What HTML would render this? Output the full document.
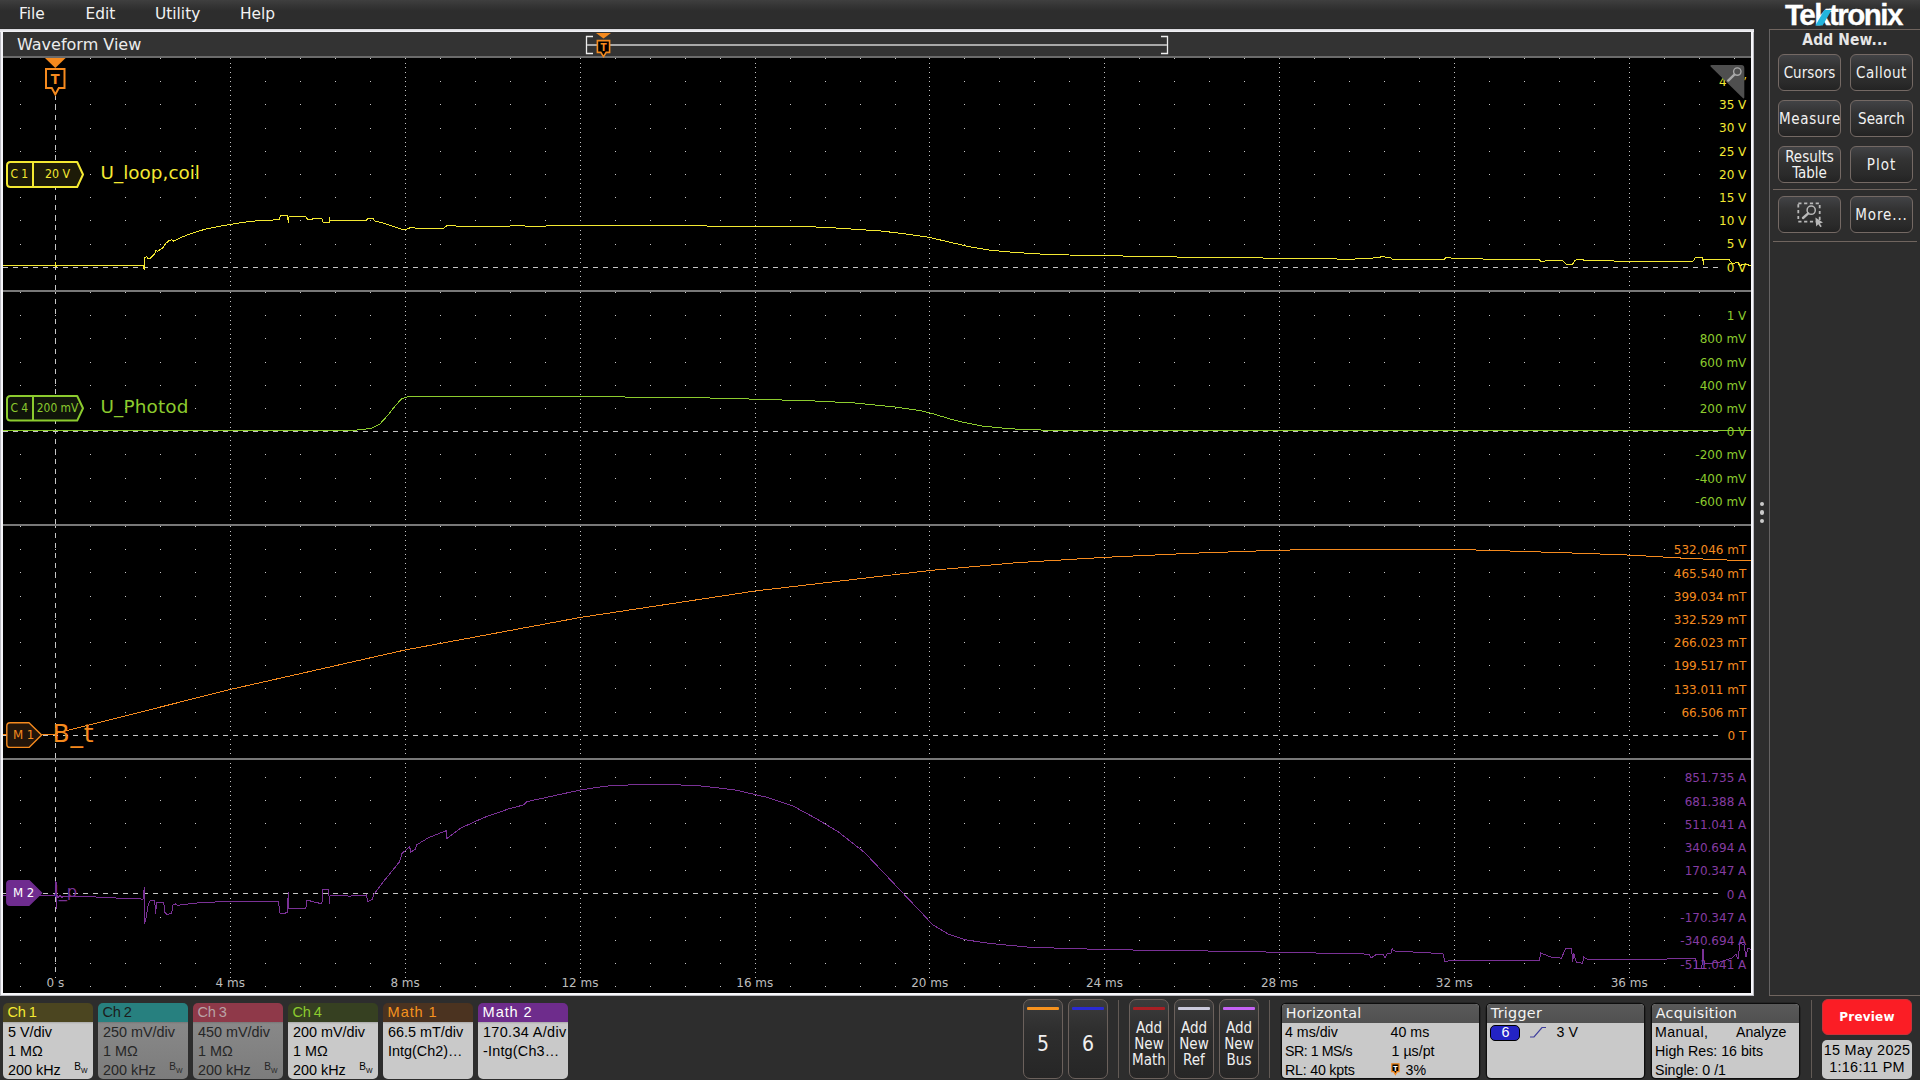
<!DOCTYPE html><html><head><meta charset='utf-8'><title>Waveform View</title><style>
*{box-sizing:border-box}
html,body{margin:0;padding:0}
body{width:1920px;height:1080px;background:#2d2d2d;position:relative;overflow:hidden;font-family:'Liberation Sans','DejaVu Sans',sans-serif;color:#eee}
.abs{position:absolute}
#menubar{left:0;top:0;width:1920px;height:29px;background:linear-gradient(#3f3f3f 0,#363636 5px,#2d2d2d 11px,#2d2d2d 100%)}
#menuline{left:0;top:28px;width:1755px;height:1px;background:#292929}
.menu{top:1px;height:28px;line-height:27px;font-family:'DejaVu Sans','Liberation Sans',sans-serif;font-size:15.4px;color:#f2f2f2;white-space:pre}
#frameo{left:0;top:29px;width:1754px;height:967px;background:#bcbcc2}
#framet{left:0;top:29px;width:1754px;height:3px;background:linear-gradient(#d6d6da,#e6e6ea 50%,#f5f5f9)}
#framei{left:1px;top:30px;width:1752px;height:965px;background:#f6f6fa}
#titlebar{left:3px;top:32px;width:1748px;height:24px;background:#333}
#titleline{left:3px;top:56px;width:1748px;height:2px;background:#6b6b6b}
#title{left:17px;top:33px;height:24px;line-height:24px;font-family:'DejaVu Sans','Liberation Sans',sans-serif;font-size:16px;color:#ececec;white-space:pre}
#plot{left:3px;top:58px;width:1748px;height:935px;background:#000}
.sep{left:3px;width:1748px;height:2px;background:#787878}
svg{position:absolute;left:0;top:0}
svg text{white-space:pre}
/* right panel */
.rline{background:#70655f}
#addnew{left:1770px;top:30px;width:150px;height:20px;line-height:20px;letter-spacing:0.15px;text-align:center;font-family:'DejaVu Sans Condensed','DejaVu Sans','Liberation Sans',sans-serif;font-weight:bold;font-size:15.4px;color:#e6e6e6}
.rbtn{width:63px;height:37px;border:1px solid #746964;border-radius:6px;background:linear-gradient(#424346 0%,#333 35%,#2a2a2a 80%,#232323 100%);font-family:'DejaVu Sans Condensed','DejaVu Sans','Liberation Sans',sans-serif;font-size:15px;color:#f2f2f2;text-align:center;line-height:37px;white-space:pre}
.rbtn.two{line-height:16.4px;padding-top:1.6px}
/* bottom badges */
.badge{top:1003px;width:90px;height:76px;border-radius:5px;overflow:hidden;font-family:'Liberation Sans','DejaVu Sans',sans-serif;font-size:14.4px;color:#000}
.badge .hd{position:absolute;left:0;top:0;width:100%;height:19px;line-height:19px;padding-left:4.6px;font-size:14.6px;white-space:pre}
.badge .bd{position:absolute;left:0;top:19px;width:100%;height:57px;background:linear-gradient(#a9a9a9 0,#c9c9c9 2px,#c9c9c9 100%)}
.badge.off .bd{background:linear-gradient(#777 0,#888 2px,#7c7c7c 100%);color:#262626}
.badge .ln{position:absolute;left:5px;height:19px;line-height:19px;white-space:pre}
.bw{position:absolute;left:71.3px;top:40.3px;font-size:10px;line-height:10px;white-space:pre}
.bw sub{font-size:6.9px;vertical-align:-2.6px;line-height:0}
.sbtn{top:999px;width:40px;height:80px;border:1px solid #6b615c;border-radius:7px;background:linear-gradient(#3c3c3c 0%,#2e2e2e 40%,#262626 100%);font-family:'DejaVu Sans Condensed','DejaVu Sans','Liberation Sans',sans-serif;color:#f0f0f0;text-align:center}
.sbtn .bar{position:absolute;left:3px;top:7.2px;width:32px;height:2.5px;border-radius:1px}
.sbtn .num{position:absolute;left:0;top:29.8px;width:38px;font-size:21px;line-height:28px}
.sbtn .txt{position:absolute;left:-4px;top:20.4px;width:46px;font-size:15px;line-height:16px;white-space:pre}
.vdiv{top:1000px;width:1px;height:78px;background:#625a55}
.ibadge{top:1004px;height:74px;box-shadow:0 0 0 1.3px #0e0e0e;border-radius:4px;overflow:hidden;background:#c9c9c9;font-family:'Liberation Sans','DejaVu Sans',sans-serif;font-size:14.2px;color:#000}
.ibadge .hd{position:absolute;left:0;top:0;width:100%;height:18.5px;line-height:19px;padding-left:3.8px;letter-spacing:0.28px;background:linear-gradient(#5a5a5a,#505050);font-family:'DejaVu Sans','Liberation Sans',sans-serif;font-size:14.3px;color:#f4f4f4;white-space:pre}
.ibadge .ln{position:absolute;height:19px;line-height:19px;white-space:pre}
#preview{left:1822px;top:999px;width:90px;height:36px;border-radius:6px;background:#fb1d25;border:1px solid #c8333a;font-family:'DejaVu Sans','Liberation Sans',sans-serif;font-weight:bold;font-size:12px;letter-spacing:0.2px;color:#fff;text-align:center;line-height:35px}
#logo{left:1785px;top:-1px;height:32px;line-height:32px;font-family:'Liberation Sans','DejaVu Sans',sans-serif;font-weight:bold;font-size:29.6px;letter-spacing:-1.58px;color:#fff;white-space:pre;-webkit-text-stroke:0.3px #fff}
#date{left:1822px;top:1040px;width:90px;height:39px;border-radius:5px;background:#c9c9c9;font-family:'Liberation Sans','DejaVu Sans',sans-serif;font-size:14.4px;letter-spacing:0.32px;color:#000;text-align:center;line-height:17px;padding-top:2px;white-space:pre}
</style></head><body><div id='menubar' class='abs'></div><div id='menuline' class='abs'></div><div class='abs menu' style='left:19px'>File</div><div class='abs menu' style='left:85.5px'>Edit</div><div class='abs menu' style='left:155px'>Utility</div><div class='abs menu' style='left:240px'>Help</div><div id='frameo' class='abs'></div><div id='framei' class='abs'></div><div id='framet' class='abs'></div><div id='titlebar' class='abs'></div><div id='titleline' class='abs'></div><div id='title' class='abs'>Waveform View</div><div id='plot' class='abs'></div><svg width='1920' height='1080' viewBox='0 0 1920 1080' font-family="'DejaVu Sans','Liberation Sans',sans-serif"><path d='M20 58h1M20 81h1M20 104h1M20 128h1M20 151h1M20 174h1M20 197h1M20 220h1M20 244h1M20 292h1M20 315h1M20 338h1M20 362h1M20 385h1M20 408h1M20 454h1M20 478h1M20 501h1M20 526h1M20 549h1M20 572h1M20 596h1M20 619h1M20 642h1M20 665h1M20 688h1M20 712h1M20 777h1M20 800h1M20 823h1M20 847h1M20 870h1M20 917h1M20 940h1M20 963h1M20 986h1M55 58h1M55 81h1M55 104h1M55 128h1M55 151h1M55 174h1M55 197h1M55 220h1M55 244h1M55 292h1M55 315h1M55 338h1M55 362h1M55 385h1M55 408h1M55 454h1M55 478h1M55 501h1M55 526h1M55 549h1M55 572h1M55 596h1M55 619h1M55 642h1M55 665h1M55 688h1M55 712h1M55 777h1M55 800h1M55 823h1M55 847h1M55 870h1M55 917h1M55 940h1M55 963h1M55 986h1M90 58h1M90 81h1M90 104h1M90 128h1M90 151h1M90 174h1M90 197h1M90 220h1M90 244h1M90 292h1M90 315h1M90 338h1M90 362h1M90 385h1M90 408h1M90 454h1M90 478h1M90 501h1M90 526h1M90 549h1M90 572h1M90 596h1M90 619h1M90 642h1M90 665h1M90 688h1M90 712h1M90 777h1M90 800h1M90 823h1M90 847h1M90 870h1M90 917h1M90 940h1M90 963h1M90 986h1M125 58h1M125 81h1M125 104h1M125 128h1M125 151h1M125 174h1M125 197h1M125 220h1M125 244h1M125 292h1M125 315h1M125 338h1M125 362h1M125 385h1M125 408h1M125 454h1M125 478h1M125 501h1M125 526h1M125 549h1M125 572h1M125 596h1M125 619h1M125 642h1M125 665h1M125 688h1M125 712h1M125 777h1M125 800h1M125 823h1M125 847h1M125 870h1M125 917h1M125 940h1M125 963h1M125 986h1M160 58h1M160 81h1M160 104h1M160 128h1M160 151h1M160 174h1M160 197h1M160 220h1M160 244h1M160 292h1M160 315h1M160 338h1M160 362h1M160 385h1M160 408h1M160 454h1M160 478h1M160 501h1M160 526h1M160 549h1M160 572h1M160 596h1M160 619h1M160 642h1M160 665h1M160 688h1M160 712h1M160 777h1M160 800h1M160 823h1M160 847h1M160 870h1M160 917h1M160 940h1M160 963h1M160 986h1M195 58h1M195 81h1M195 104h1M195 128h1M195 151h1M195 174h1M195 197h1M195 220h1M195 244h1M195 292h1M195 315h1M195 338h1M195 362h1M195 385h1M195 408h1M195 454h1M195 478h1M195 501h1M195 526h1M195 549h1M195 572h1M195 596h1M195 619h1M195 642h1M195 665h1M195 688h1M195 712h1M195 777h1M195 800h1M195 823h1M195 847h1M195 870h1M195 917h1M195 940h1M195 963h1M195 986h1M230 58h1M230 63h1M230 67h1M230 72h1M230 77h1M230 81h1M230 86h1M230 90h1M230 95h1M230 100h1M230 104h1M230 109h1M230 114h1M230 118h1M230 123h1M230 128h1M230 132h1M230 137h1M230 142h1M230 146h1M230 151h1M230 155h1M230 160h1M230 165h1M230 169h1M230 174h1M230 179h1M230 183h1M230 188h1M230 193h1M230 197h1M230 202h1M230 206h1M230 211h1M230 216h1M230 220h1M230 225h1M230 230h1M230 234h1M230 239h1M230 244h1M230 248h1M230 253h1M230 258h1M230 262h1M230 271h1M230 276h1M230 281h1M230 285h1M230 292h1M230 297h1M230 301h1M230 306h1M230 311h1M230 315h1M230 320h1M230 324h1M230 329h1M230 334h1M230 338h1M230 343h1M230 348h1M230 352h1M230 357h1M230 362h1M230 366h1M230 371h1M230 376h1M230 380h1M230 385h1M230 389h1M230 394h1M230 399h1M230 403h1M230 408h1M230 413h1M230 417h1M230 422h1M230 427h1M230 436h1M230 440h1M230 445h1M230 450h1M230 454h1M230 459h1M230 464h1M230 468h1M230 473h1M230 478h1M230 482h1M230 487h1M230 492h1M230 496h1M230 501h1M230 505h1M230 510h1M230 515h1M230 519h1M230 526h1M230 531h1M230 535h1M230 540h1M230 545h1M230 549h1M230 554h1M230 558h1M230 563h1M230 568h1M230 572h1M230 577h1M230 582h1M230 586h1M230 591h1M230 596h1M230 600h1M230 605h1M230 610h1M230 614h1M230 619h1M230 623h1M230 628h1M230 633h1M230 637h1M230 642h1M230 647h1M230 651h1M230 656h1M230 661h1M230 665h1M230 670h1M230 674h1M230 679h1M230 684h1M230 688h1M230 693h1M230 698h1M230 702h1M230 707h1M230 712h1M230 716h1M230 721h1M230 726h1M230 730h1M230 739h1M230 744h1M230 749h1M230 753h1M230 763h1M230 767h1M230 772h1M230 777h1M230 781h1M230 786h1M230 791h1M230 795h1M230 800h1M230 805h1M230 809h1M230 814h1M230 819h1M230 823h1M230 828h1M230 833h1M230 837h1M230 842h1M230 847h1M230 851h1M230 856h1M230 861h1M230 865h1M230 870h1M230 875h1M230 879h1M230 884h1M230 889h1M230 898h1M230 903h1M230 907h1M230 912h1M230 917h1M230 921h1M230 926h1M230 931h1M230 935h1M230 940h1M230 945h1M230 949h1M230 954h1M230 959h1M230 963h1M230 968h1M230 972h1M230 977h1M230 982h1M230 986h1M230 991h1M265 58h1M265 81h1M265 104h1M265 128h1M265 151h1M265 174h1M265 197h1M265 220h1M265 244h1M265 292h1M265 315h1M265 338h1M265 362h1M265 385h1M265 408h1M265 454h1M265 478h1M265 501h1M265 526h1M265 549h1M265 572h1M265 596h1M265 619h1M265 642h1M265 665h1M265 688h1M265 712h1M265 777h1M265 800h1M265 823h1M265 847h1M265 870h1M265 917h1M265 940h1M265 963h1M265 986h1M300 58h1M300 81h1M300 104h1M300 128h1M300 151h1M300 174h1M300 197h1M300 220h1M300 244h1M300 292h1M300 315h1M300 338h1M300 362h1M300 385h1M300 408h1M300 454h1M300 478h1M300 501h1M300 526h1M300 549h1M300 572h1M300 596h1M300 619h1M300 642h1M300 665h1M300 688h1M300 712h1M300 777h1M300 800h1M300 823h1M300 847h1M300 870h1M300 917h1M300 940h1M300 963h1M300 986h1M335 58h1M335 81h1M335 104h1M335 128h1M335 151h1M335 174h1M335 197h1M335 220h1M335 244h1M335 292h1M335 315h1M335 338h1M335 362h1M335 385h1M335 408h1M335 454h1M335 478h1M335 501h1M335 526h1M335 549h1M335 572h1M335 596h1M335 619h1M335 642h1M335 665h1M335 688h1M335 712h1M335 777h1M335 800h1M335 823h1M335 847h1M335 870h1M335 917h1M335 940h1M335 963h1M335 986h1M370 58h1M370 81h1M370 104h1M370 128h1M370 151h1M370 174h1M370 197h1M370 220h1M370 244h1M370 292h1M370 315h1M370 338h1M370 362h1M370 385h1M370 408h1M370 454h1M370 478h1M370 501h1M370 526h1M370 549h1M370 572h1M370 596h1M370 619h1M370 642h1M370 665h1M370 688h1M370 712h1M370 777h1M370 800h1M370 823h1M370 847h1M370 870h1M370 917h1M370 940h1M370 963h1M370 986h1M405 58h1M405 63h1M405 67h1M405 72h1M405 77h1M405 81h1M405 86h1M405 90h1M405 95h1M405 100h1M405 104h1M405 109h1M405 114h1M405 118h1M405 123h1M405 128h1M405 132h1M405 137h1M405 142h1M405 146h1M405 151h1M405 155h1M405 160h1M405 165h1M405 169h1M405 174h1M405 179h1M405 183h1M405 188h1M405 193h1M405 197h1M405 202h1M405 206h1M405 211h1M405 216h1M405 220h1M405 225h1M405 230h1M405 234h1M405 239h1M405 244h1M405 248h1M405 253h1M405 258h1M405 262h1M405 271h1M405 276h1M405 281h1M405 285h1M405 292h1M405 297h1M405 301h1M405 306h1M405 311h1M405 315h1M405 320h1M405 324h1M405 329h1M405 334h1M405 338h1M405 343h1M405 348h1M405 352h1M405 357h1M405 362h1M405 366h1M405 371h1M405 376h1M405 380h1M405 385h1M405 389h1M405 394h1M405 399h1M405 403h1M405 408h1M405 413h1M405 417h1M405 422h1M405 427h1M405 436h1M405 440h1M405 445h1M405 450h1M405 454h1M405 459h1M405 464h1M405 468h1M405 473h1M405 478h1M405 482h1M405 487h1M405 492h1M405 496h1M405 501h1M405 505h1M405 510h1M405 515h1M405 519h1M405 526h1M405 531h1M405 535h1M405 540h1M405 545h1M405 549h1M405 554h1M405 558h1M405 563h1M405 568h1M405 572h1M405 577h1M405 582h1M405 586h1M405 591h1M405 596h1M405 600h1M405 605h1M405 610h1M405 614h1M405 619h1M405 623h1M405 628h1M405 633h1M405 637h1M405 642h1M405 647h1M405 651h1M405 656h1M405 661h1M405 665h1M405 670h1M405 674h1M405 679h1M405 684h1M405 688h1M405 693h1M405 698h1M405 702h1M405 707h1M405 712h1M405 716h1M405 721h1M405 726h1M405 730h1M405 739h1M405 744h1M405 749h1M405 753h1M405 763h1M405 767h1M405 772h1M405 777h1M405 781h1M405 786h1M405 791h1M405 795h1M405 800h1M405 805h1M405 809h1M405 814h1M405 819h1M405 823h1M405 828h1M405 833h1M405 837h1M405 842h1M405 847h1M405 851h1M405 856h1M405 861h1M405 865h1M405 870h1M405 875h1M405 879h1M405 884h1M405 889h1M405 898h1M405 903h1M405 907h1M405 912h1M405 917h1M405 921h1M405 926h1M405 931h1M405 935h1M405 940h1M405 945h1M405 949h1M405 954h1M405 959h1M405 963h1M405 968h1M405 972h1M405 977h1M405 982h1M405 986h1M405 991h1M440 58h1M440 81h1M440 104h1M440 128h1M440 151h1M440 174h1M440 197h1M440 220h1M440 244h1M440 292h1M440 315h1M440 338h1M440 362h1M440 385h1M440 408h1M440 454h1M440 478h1M440 501h1M440 526h1M440 549h1M440 572h1M440 596h1M440 619h1M440 642h1M440 665h1M440 688h1M440 712h1M440 777h1M440 800h1M440 823h1M440 847h1M440 870h1M440 917h1M440 940h1M440 963h1M440 986h1M475 58h1M475 81h1M475 104h1M475 128h1M475 151h1M475 174h1M475 197h1M475 220h1M475 244h1M475 292h1M475 315h1M475 338h1M475 362h1M475 385h1M475 408h1M475 454h1M475 478h1M475 501h1M475 526h1M475 549h1M475 572h1M475 596h1M475 619h1M475 642h1M475 665h1M475 688h1M475 712h1M475 777h1M475 800h1M475 823h1M475 847h1M475 870h1M475 917h1M475 940h1M475 963h1M475 986h1M510 58h1M510 81h1M510 104h1M510 128h1M510 151h1M510 174h1M510 197h1M510 220h1M510 244h1M510 292h1M510 315h1M510 338h1M510 362h1M510 385h1M510 408h1M510 454h1M510 478h1M510 501h1M510 526h1M510 549h1M510 572h1M510 596h1M510 619h1M510 642h1M510 665h1M510 688h1M510 712h1M510 777h1M510 800h1M510 823h1M510 847h1M510 870h1M510 917h1M510 940h1M510 963h1M510 986h1M545 58h1M545 81h1M545 104h1M545 128h1M545 151h1M545 174h1M545 197h1M545 220h1M545 244h1M545 292h1M545 315h1M545 338h1M545 362h1M545 385h1M545 408h1M545 454h1M545 478h1M545 501h1M545 526h1M545 549h1M545 572h1M545 596h1M545 619h1M545 642h1M545 665h1M545 688h1M545 712h1M545 777h1M545 800h1M545 823h1M545 847h1M545 870h1M545 917h1M545 940h1M545 963h1M545 986h1M580 58h1M580 63h1M580 67h1M580 72h1M580 77h1M580 81h1M580 86h1M580 90h1M580 95h1M580 100h1M580 104h1M580 109h1M580 114h1M580 118h1M580 123h1M580 128h1M580 132h1M580 137h1M580 142h1M580 146h1M580 151h1M580 155h1M580 160h1M580 165h1M580 169h1M580 174h1M580 179h1M580 183h1M580 188h1M580 193h1M580 197h1M580 202h1M580 206h1M580 211h1M580 216h1M580 220h1M580 225h1M580 230h1M580 234h1M580 239h1M580 244h1M580 248h1M580 253h1M580 258h1M580 262h1M580 271h1M580 276h1M580 281h1M580 285h1M580 292h1M580 297h1M580 301h1M580 306h1M580 311h1M580 315h1M580 320h1M580 324h1M580 329h1M580 334h1M580 338h1M580 343h1M580 348h1M580 352h1M580 357h1M580 362h1M580 366h1M580 371h1M580 376h1M580 380h1M580 385h1M580 389h1M580 394h1M580 399h1M580 403h1M580 408h1M580 413h1M580 417h1M580 422h1M580 427h1M580 436h1M580 440h1M580 445h1M580 450h1M580 454h1M580 459h1M580 464h1M580 468h1M580 473h1M580 478h1M580 482h1M580 487h1M580 492h1M580 496h1M580 501h1M580 505h1M580 510h1M580 515h1M580 519h1M580 526h1M580 531h1M580 535h1M580 540h1M580 545h1M580 549h1M580 554h1M580 558h1M580 563h1M580 568h1M580 572h1M580 577h1M580 582h1M580 586h1M580 591h1M580 596h1M580 600h1M580 605h1M580 610h1M580 614h1M580 619h1M580 623h1M580 628h1M580 633h1M580 637h1M580 642h1M580 647h1M580 651h1M580 656h1M580 661h1M580 665h1M580 670h1M580 674h1M580 679h1M580 684h1M580 688h1M580 693h1M580 698h1M580 702h1M580 707h1M580 712h1M580 716h1M580 721h1M580 726h1M580 730h1M580 739h1M580 744h1M580 749h1M580 753h1M580 763h1M580 767h1M580 772h1M580 777h1M580 781h1M580 786h1M580 791h1M580 795h1M580 800h1M580 805h1M580 809h1M580 814h1M580 819h1M580 823h1M580 828h1M580 833h1M580 837h1M580 842h1M580 847h1M580 851h1M580 856h1M580 861h1M580 865h1M580 870h1M580 875h1M580 879h1M580 884h1M580 889h1M580 898h1M580 903h1M580 907h1M580 912h1M580 917h1M580 921h1M580 926h1M580 931h1M580 935h1M580 940h1M580 945h1M580 949h1M580 954h1M580 959h1M580 963h1M580 968h1M580 972h1M580 977h1M580 982h1M580 986h1M580 991h1M615 58h1M615 81h1M615 104h1M615 128h1M615 151h1M615 174h1M615 197h1M615 220h1M615 244h1M615 292h1M615 315h1M615 338h1M615 362h1M615 385h1M615 408h1M615 454h1M615 478h1M615 501h1M615 526h1M615 549h1M615 572h1M615 596h1M615 619h1M615 642h1M615 665h1M615 688h1M615 712h1M615 777h1M615 800h1M615 823h1M615 847h1M615 870h1M615 917h1M615 940h1M615 963h1M615 986h1M650 58h1M650 81h1M650 104h1M650 128h1M650 151h1M650 174h1M650 197h1M650 220h1M650 244h1M650 292h1M650 315h1M650 338h1M650 362h1M650 385h1M650 408h1M650 454h1M650 478h1M650 501h1M650 526h1M650 549h1M650 572h1M650 596h1M650 619h1M650 642h1M650 665h1M650 688h1M650 712h1M650 777h1M650 800h1M650 823h1M650 847h1M650 870h1M650 917h1M650 940h1M650 963h1M650 986h1M685 58h1M685 81h1M685 104h1M685 128h1M685 151h1M685 174h1M685 197h1M685 220h1M685 244h1M685 292h1M685 315h1M685 338h1M685 362h1M685 385h1M685 408h1M685 454h1M685 478h1M685 501h1M685 526h1M685 549h1M685 572h1M685 596h1M685 619h1M685 642h1M685 665h1M685 688h1M685 712h1M685 777h1M685 800h1M685 823h1M685 847h1M685 870h1M685 917h1M685 940h1M685 963h1M685 986h1M720 58h1M720 81h1M720 104h1M720 128h1M720 151h1M720 174h1M720 197h1M720 220h1M720 244h1M720 292h1M720 315h1M720 338h1M720 362h1M720 385h1M720 408h1M720 454h1M720 478h1M720 501h1M720 526h1M720 549h1M720 572h1M720 596h1M720 619h1M720 642h1M720 665h1M720 688h1M720 712h1M720 777h1M720 800h1M720 823h1M720 847h1M720 870h1M720 917h1M720 940h1M720 963h1M720 986h1M755 58h1M755 63h1M755 67h1M755 72h1M755 77h1M755 81h1M755 86h1M755 90h1M755 95h1M755 100h1M755 104h1M755 109h1M755 114h1M755 118h1M755 123h1M755 128h1M755 132h1M755 137h1M755 142h1M755 146h1M755 151h1M755 155h1M755 160h1M755 165h1M755 169h1M755 174h1M755 179h1M755 183h1M755 188h1M755 193h1M755 197h1M755 202h1M755 206h1M755 211h1M755 216h1M755 220h1M755 225h1M755 230h1M755 234h1M755 239h1M755 244h1M755 248h1M755 253h1M755 258h1M755 262h1M755 271h1M755 276h1M755 281h1M755 285h1M755 292h1M755 297h1M755 301h1M755 306h1M755 311h1M755 315h1M755 320h1M755 324h1M755 329h1M755 334h1M755 338h1M755 343h1M755 348h1M755 352h1M755 357h1M755 362h1M755 366h1M755 371h1M755 376h1M755 380h1M755 385h1M755 389h1M755 394h1M755 399h1M755 403h1M755 408h1M755 413h1M755 417h1M755 422h1M755 427h1M755 436h1M755 440h1M755 445h1M755 450h1M755 454h1M755 459h1M755 464h1M755 468h1M755 473h1M755 478h1M755 482h1M755 487h1M755 492h1M755 496h1M755 501h1M755 505h1M755 510h1M755 515h1M755 519h1M755 526h1M755 531h1M755 535h1M755 540h1M755 545h1M755 549h1M755 554h1M755 558h1M755 563h1M755 568h1M755 572h1M755 577h1M755 582h1M755 586h1M755 591h1M755 596h1M755 600h1M755 605h1M755 610h1M755 614h1M755 619h1M755 623h1M755 628h1M755 633h1M755 637h1M755 642h1M755 647h1M755 651h1M755 656h1M755 661h1M755 665h1M755 670h1M755 674h1M755 679h1M755 684h1M755 688h1M755 693h1M755 698h1M755 702h1M755 707h1M755 712h1M755 716h1M755 721h1M755 726h1M755 730h1M755 739h1M755 744h1M755 749h1M755 753h1M755 763h1M755 767h1M755 772h1M755 777h1M755 781h1M755 786h1M755 791h1M755 795h1M755 800h1M755 805h1M755 809h1M755 814h1M755 819h1M755 823h1M755 828h1M755 833h1M755 837h1M755 842h1M755 847h1M755 851h1M755 856h1M755 861h1M755 865h1M755 870h1M755 875h1M755 879h1M755 884h1M755 889h1M755 898h1M755 903h1M755 907h1M755 912h1M755 917h1M755 921h1M755 926h1M755 931h1M755 935h1M755 940h1M755 945h1M755 949h1M755 954h1M755 959h1M755 963h1M755 968h1M755 972h1M755 977h1M755 982h1M755 986h1M755 991h1M790 58h1M790 81h1M790 104h1M790 128h1M790 151h1M790 174h1M790 197h1M790 220h1M790 244h1M790 292h1M790 315h1M790 338h1M790 362h1M790 385h1M790 408h1M790 454h1M790 478h1M790 501h1M790 526h1M790 549h1M790 572h1M790 596h1M790 619h1M790 642h1M790 665h1M790 688h1M790 712h1M790 777h1M790 800h1M790 823h1M790 847h1M790 870h1M790 917h1M790 940h1M790 963h1M790 986h1M825 58h1M825 81h1M825 104h1M825 128h1M825 151h1M825 174h1M825 197h1M825 220h1M825 244h1M825 292h1M825 315h1M825 338h1M825 362h1M825 385h1M825 408h1M825 454h1M825 478h1M825 501h1M825 526h1M825 549h1M825 572h1M825 596h1M825 619h1M825 642h1M825 665h1M825 688h1M825 712h1M825 777h1M825 800h1M825 823h1M825 847h1M825 870h1M825 917h1M825 940h1M825 963h1M825 986h1M860 58h1M860 81h1M860 104h1M860 128h1M860 151h1M860 174h1M860 197h1M860 220h1M860 244h1M860 292h1M860 315h1M860 338h1M860 362h1M860 385h1M860 408h1M860 454h1M860 478h1M860 501h1M860 526h1M860 549h1M860 572h1M860 596h1M860 619h1M860 642h1M860 665h1M860 688h1M860 712h1M860 777h1M860 800h1M860 823h1M860 847h1M860 870h1M860 917h1M860 940h1M860 963h1M860 986h1M895 58h1M895 81h1M895 104h1M895 128h1M895 151h1M895 174h1M895 197h1M895 220h1M895 244h1M895 292h1M895 315h1M895 338h1M895 362h1M895 385h1M895 408h1M895 454h1M895 478h1M895 501h1M895 526h1M895 549h1M895 572h1M895 596h1M895 619h1M895 642h1M895 665h1M895 688h1M895 712h1M895 777h1M895 800h1M895 823h1M895 847h1M895 870h1M895 917h1M895 940h1M895 963h1M895 986h1M929 58h1M929 63h1M929 67h1M929 72h1M929 77h1M929 81h1M929 86h1M929 90h1M929 95h1M929 100h1M929 104h1M929 109h1M929 114h1M929 118h1M929 123h1M929 128h1M929 132h1M929 137h1M929 142h1M929 146h1M929 151h1M929 155h1M929 160h1M929 165h1M929 169h1M929 174h1M929 179h1M929 183h1M929 188h1M929 193h1M929 197h1M929 202h1M929 206h1M929 211h1M929 216h1M929 220h1M929 225h1M929 230h1M929 234h1M929 239h1M929 244h1M929 248h1M929 253h1M929 258h1M929 262h1M929 271h1M929 276h1M929 281h1M929 285h1M929 292h1M929 297h1M929 301h1M929 306h1M929 311h1M929 315h1M929 320h1M929 324h1M929 329h1M929 334h1M929 338h1M929 343h1M929 348h1M929 352h1M929 357h1M929 362h1M929 366h1M929 371h1M929 376h1M929 380h1M929 385h1M929 389h1M929 394h1M929 399h1M929 403h1M929 408h1M929 413h1M929 417h1M929 422h1M929 427h1M929 436h1M929 440h1M929 445h1M929 450h1M929 454h1M929 459h1M929 464h1M929 468h1M929 473h1M929 478h1M929 482h1M929 487h1M929 492h1M929 496h1M929 501h1M929 505h1M929 510h1M929 515h1M929 519h1M929 526h1M929 531h1M929 535h1M929 540h1M929 545h1M929 549h1M929 554h1M929 558h1M929 563h1M929 568h1M929 572h1M929 577h1M929 582h1M929 586h1M929 591h1M929 596h1M929 600h1M929 605h1M929 610h1M929 614h1M929 619h1M929 623h1M929 628h1M929 633h1M929 637h1M929 642h1M929 647h1M929 651h1M929 656h1M929 661h1M929 665h1M929 670h1M929 674h1M929 679h1M929 684h1M929 688h1M929 693h1M929 698h1M929 702h1M929 707h1M929 712h1M929 716h1M929 721h1M929 726h1M929 730h1M929 739h1M929 744h1M929 749h1M929 753h1M929 763h1M929 767h1M929 772h1M929 777h1M929 781h1M929 786h1M929 791h1M929 795h1M929 800h1M929 805h1M929 809h1M929 814h1M929 819h1M929 823h1M929 828h1M929 833h1M929 837h1M929 842h1M929 847h1M929 851h1M929 856h1M929 861h1M929 865h1M929 870h1M929 875h1M929 879h1M929 884h1M929 889h1M929 898h1M929 903h1M929 907h1M929 912h1M929 917h1M929 921h1M929 926h1M929 931h1M929 935h1M929 940h1M929 945h1M929 949h1M929 954h1M929 959h1M929 963h1M929 968h1M929 972h1M929 977h1M929 982h1M929 986h1M929 991h1M964 58h1M964 81h1M964 104h1M964 128h1M964 151h1M964 174h1M964 197h1M964 220h1M964 244h1M964 292h1M964 315h1M964 338h1M964 362h1M964 385h1M964 408h1M964 454h1M964 478h1M964 501h1M964 526h1M964 549h1M964 572h1M964 596h1M964 619h1M964 642h1M964 665h1M964 688h1M964 712h1M964 777h1M964 800h1M964 823h1M964 847h1M964 870h1M964 917h1M964 940h1M964 963h1M964 986h1M999 58h1M999 81h1M999 104h1M999 128h1M999 151h1M999 174h1M999 197h1M999 220h1M999 244h1M999 292h1M999 315h1M999 338h1M999 362h1M999 385h1M999 408h1M999 454h1M999 478h1M999 501h1M999 526h1M999 549h1M999 572h1M999 596h1M999 619h1M999 642h1M999 665h1M999 688h1M999 712h1M999 777h1M999 800h1M999 823h1M999 847h1M999 870h1M999 917h1M999 940h1M999 963h1M999 986h1M1034 58h1M1034 81h1M1034 104h1M1034 128h1M1034 151h1M1034 174h1M1034 197h1M1034 220h1M1034 244h1M1034 292h1M1034 315h1M1034 338h1M1034 362h1M1034 385h1M1034 408h1M1034 454h1M1034 478h1M1034 501h1M1034 526h1M1034 549h1M1034 572h1M1034 596h1M1034 619h1M1034 642h1M1034 665h1M1034 688h1M1034 712h1M1034 777h1M1034 800h1M1034 823h1M1034 847h1M1034 870h1M1034 917h1M1034 940h1M1034 963h1M1034 986h1M1069 58h1M1069 81h1M1069 104h1M1069 128h1M1069 151h1M1069 174h1M1069 197h1M1069 220h1M1069 244h1M1069 292h1M1069 315h1M1069 338h1M1069 362h1M1069 385h1M1069 408h1M1069 454h1M1069 478h1M1069 501h1M1069 526h1M1069 549h1M1069 572h1M1069 596h1M1069 619h1M1069 642h1M1069 665h1M1069 688h1M1069 712h1M1069 777h1M1069 800h1M1069 823h1M1069 847h1M1069 870h1M1069 917h1M1069 940h1M1069 963h1M1069 986h1M1104 58h1M1104 63h1M1104 67h1M1104 72h1M1104 77h1M1104 81h1M1104 86h1M1104 90h1M1104 95h1M1104 100h1M1104 104h1M1104 109h1M1104 114h1M1104 118h1M1104 123h1M1104 128h1M1104 132h1M1104 137h1M1104 142h1M1104 146h1M1104 151h1M1104 155h1M1104 160h1M1104 165h1M1104 169h1M1104 174h1M1104 179h1M1104 183h1M1104 188h1M1104 193h1M1104 197h1M1104 202h1M1104 206h1M1104 211h1M1104 216h1M1104 220h1M1104 225h1M1104 230h1M1104 234h1M1104 239h1M1104 244h1M1104 248h1M1104 253h1M1104 258h1M1104 262h1M1104 271h1M1104 276h1M1104 281h1M1104 285h1M1104 292h1M1104 297h1M1104 301h1M1104 306h1M1104 311h1M1104 315h1M1104 320h1M1104 324h1M1104 329h1M1104 334h1M1104 338h1M1104 343h1M1104 348h1M1104 352h1M1104 357h1M1104 362h1M1104 366h1M1104 371h1M1104 376h1M1104 380h1M1104 385h1M1104 389h1M1104 394h1M1104 399h1M1104 403h1M1104 408h1M1104 413h1M1104 417h1M1104 422h1M1104 427h1M1104 436h1M1104 440h1M1104 445h1M1104 450h1M1104 454h1M1104 459h1M1104 464h1M1104 468h1M1104 473h1M1104 478h1M1104 482h1M1104 487h1M1104 492h1M1104 496h1M1104 501h1M1104 505h1M1104 510h1M1104 515h1M1104 519h1M1104 526h1M1104 531h1M1104 535h1M1104 540h1M1104 545h1M1104 549h1M1104 554h1M1104 558h1M1104 563h1M1104 568h1M1104 572h1M1104 577h1M1104 582h1M1104 586h1M1104 591h1M1104 596h1M1104 600h1M1104 605h1M1104 610h1M1104 614h1M1104 619h1M1104 623h1M1104 628h1M1104 633h1M1104 637h1M1104 642h1M1104 647h1M1104 651h1M1104 656h1M1104 661h1M1104 665h1M1104 670h1M1104 674h1M1104 679h1M1104 684h1M1104 688h1M1104 693h1M1104 698h1M1104 702h1M1104 707h1M1104 712h1M1104 716h1M1104 721h1M1104 726h1M1104 730h1M1104 739h1M1104 744h1M1104 749h1M1104 753h1M1104 763h1M1104 767h1M1104 772h1M1104 777h1M1104 781h1M1104 786h1M1104 791h1M1104 795h1M1104 800h1M1104 805h1M1104 809h1M1104 814h1M1104 819h1M1104 823h1M1104 828h1M1104 833h1M1104 837h1M1104 842h1M1104 847h1M1104 851h1M1104 856h1M1104 861h1M1104 865h1M1104 870h1M1104 875h1M1104 879h1M1104 884h1M1104 889h1M1104 898h1M1104 903h1M1104 907h1M1104 912h1M1104 917h1M1104 921h1M1104 926h1M1104 931h1M1104 935h1M1104 940h1M1104 945h1M1104 949h1M1104 954h1M1104 959h1M1104 963h1M1104 968h1M1104 972h1M1104 977h1M1104 982h1M1104 986h1M1104 991h1M1139 58h1M1139 81h1M1139 104h1M1139 128h1M1139 151h1M1139 174h1M1139 197h1M1139 220h1M1139 244h1M1139 292h1M1139 315h1M1139 338h1M1139 362h1M1139 385h1M1139 408h1M1139 454h1M1139 478h1M1139 501h1M1139 526h1M1139 549h1M1139 572h1M1139 596h1M1139 619h1M1139 642h1M1139 665h1M1139 688h1M1139 712h1M1139 777h1M1139 800h1M1139 823h1M1139 847h1M1139 870h1M1139 917h1M1139 940h1M1139 963h1M1139 986h1M1174 58h1M1174 81h1M1174 104h1M1174 128h1M1174 151h1M1174 174h1M1174 197h1M1174 220h1M1174 244h1M1174 292h1M1174 315h1M1174 338h1M1174 362h1M1174 385h1M1174 408h1M1174 454h1M1174 478h1M1174 501h1M1174 526h1M1174 549h1M1174 572h1M1174 596h1M1174 619h1M1174 642h1M1174 665h1M1174 688h1M1174 712h1M1174 777h1M1174 800h1M1174 823h1M1174 847h1M1174 870h1M1174 917h1M1174 940h1M1174 963h1M1174 986h1M1209 58h1M1209 81h1M1209 104h1M1209 128h1M1209 151h1M1209 174h1M1209 197h1M1209 220h1M1209 244h1M1209 292h1M1209 315h1M1209 338h1M1209 362h1M1209 385h1M1209 408h1M1209 454h1M1209 478h1M1209 501h1M1209 526h1M1209 549h1M1209 572h1M1209 596h1M1209 619h1M1209 642h1M1209 665h1M1209 688h1M1209 712h1M1209 777h1M1209 800h1M1209 823h1M1209 847h1M1209 870h1M1209 917h1M1209 940h1M1209 963h1M1209 986h1M1244 58h1M1244 81h1M1244 104h1M1244 128h1M1244 151h1M1244 174h1M1244 197h1M1244 220h1M1244 244h1M1244 292h1M1244 315h1M1244 338h1M1244 362h1M1244 385h1M1244 408h1M1244 454h1M1244 478h1M1244 501h1M1244 526h1M1244 549h1M1244 572h1M1244 596h1M1244 619h1M1244 642h1M1244 665h1M1244 688h1M1244 712h1M1244 777h1M1244 800h1M1244 823h1M1244 847h1M1244 870h1M1244 917h1M1244 940h1M1244 963h1M1244 986h1M1279 58h1M1279 63h1M1279 67h1M1279 72h1M1279 77h1M1279 81h1M1279 86h1M1279 90h1M1279 95h1M1279 100h1M1279 104h1M1279 109h1M1279 114h1M1279 118h1M1279 123h1M1279 128h1M1279 132h1M1279 137h1M1279 142h1M1279 146h1M1279 151h1M1279 155h1M1279 160h1M1279 165h1M1279 169h1M1279 174h1M1279 179h1M1279 183h1M1279 188h1M1279 193h1M1279 197h1M1279 202h1M1279 206h1M1279 211h1M1279 216h1M1279 220h1M1279 225h1M1279 230h1M1279 234h1M1279 239h1M1279 244h1M1279 248h1M1279 253h1M1279 258h1M1279 262h1M1279 271h1M1279 276h1M1279 281h1M1279 285h1M1279 292h1M1279 297h1M1279 301h1M1279 306h1M1279 311h1M1279 315h1M1279 320h1M1279 324h1M1279 329h1M1279 334h1M1279 338h1M1279 343h1M1279 348h1M1279 352h1M1279 357h1M1279 362h1M1279 366h1M1279 371h1M1279 376h1M1279 380h1M1279 385h1M1279 389h1M1279 394h1M1279 399h1M1279 403h1M1279 408h1M1279 413h1M1279 417h1M1279 422h1M1279 427h1M1279 436h1M1279 440h1M1279 445h1M1279 450h1M1279 454h1M1279 459h1M1279 464h1M1279 468h1M1279 473h1M1279 478h1M1279 482h1M1279 487h1M1279 492h1M1279 496h1M1279 501h1M1279 505h1M1279 510h1M1279 515h1M1279 519h1M1279 526h1M1279 531h1M1279 535h1M1279 540h1M1279 545h1M1279 549h1M1279 554h1M1279 558h1M1279 563h1M1279 568h1M1279 572h1M1279 577h1M1279 582h1M1279 586h1M1279 591h1M1279 596h1M1279 600h1M1279 605h1M1279 610h1M1279 614h1M1279 619h1M1279 623h1M1279 628h1M1279 633h1M1279 637h1M1279 642h1M1279 647h1M1279 651h1M1279 656h1M1279 661h1M1279 665h1M1279 670h1M1279 674h1M1279 679h1M1279 684h1M1279 688h1M1279 693h1M1279 698h1M1279 702h1M1279 707h1M1279 712h1M1279 716h1M1279 721h1M1279 726h1M1279 730h1M1279 739h1M1279 744h1M1279 749h1M1279 753h1M1279 763h1M1279 767h1M1279 772h1M1279 777h1M1279 781h1M1279 786h1M1279 791h1M1279 795h1M1279 800h1M1279 805h1M1279 809h1M1279 814h1M1279 819h1M1279 823h1M1279 828h1M1279 833h1M1279 837h1M1279 842h1M1279 847h1M1279 851h1M1279 856h1M1279 861h1M1279 865h1M1279 870h1M1279 875h1M1279 879h1M1279 884h1M1279 889h1M1279 898h1M1279 903h1M1279 907h1M1279 912h1M1279 917h1M1279 921h1M1279 926h1M1279 931h1M1279 935h1M1279 940h1M1279 945h1M1279 949h1M1279 954h1M1279 959h1M1279 963h1M1279 968h1M1279 972h1M1279 977h1M1279 982h1M1279 986h1M1279 991h1M1314 58h1M1314 81h1M1314 104h1M1314 128h1M1314 151h1M1314 174h1M1314 197h1M1314 220h1M1314 244h1M1314 292h1M1314 315h1M1314 338h1M1314 362h1M1314 385h1M1314 408h1M1314 454h1M1314 478h1M1314 501h1M1314 526h1M1314 549h1M1314 572h1M1314 596h1M1314 619h1M1314 642h1M1314 665h1M1314 688h1M1314 712h1M1314 777h1M1314 800h1M1314 823h1M1314 847h1M1314 870h1M1314 917h1M1314 940h1M1314 963h1M1314 986h1M1349 58h1M1349 81h1M1349 104h1M1349 128h1M1349 151h1M1349 174h1M1349 197h1M1349 220h1M1349 244h1M1349 292h1M1349 315h1M1349 338h1M1349 362h1M1349 385h1M1349 408h1M1349 454h1M1349 478h1M1349 501h1M1349 526h1M1349 549h1M1349 572h1M1349 596h1M1349 619h1M1349 642h1M1349 665h1M1349 688h1M1349 712h1M1349 777h1M1349 800h1M1349 823h1M1349 847h1M1349 870h1M1349 917h1M1349 940h1M1349 963h1M1349 986h1M1384 58h1M1384 81h1M1384 104h1M1384 128h1M1384 151h1M1384 174h1M1384 197h1M1384 220h1M1384 244h1M1384 292h1M1384 315h1M1384 338h1M1384 362h1M1384 385h1M1384 408h1M1384 454h1M1384 478h1M1384 501h1M1384 526h1M1384 549h1M1384 572h1M1384 596h1M1384 619h1M1384 642h1M1384 665h1M1384 688h1M1384 712h1M1384 777h1M1384 800h1M1384 823h1M1384 847h1M1384 870h1M1384 917h1M1384 940h1M1384 963h1M1384 986h1M1419 58h1M1419 81h1M1419 104h1M1419 128h1M1419 151h1M1419 174h1M1419 197h1M1419 220h1M1419 244h1M1419 292h1M1419 315h1M1419 338h1M1419 362h1M1419 385h1M1419 408h1M1419 454h1M1419 478h1M1419 501h1M1419 526h1M1419 549h1M1419 572h1M1419 596h1M1419 619h1M1419 642h1M1419 665h1M1419 688h1M1419 712h1M1419 777h1M1419 800h1M1419 823h1M1419 847h1M1419 870h1M1419 917h1M1419 940h1M1419 963h1M1419 986h1M1454 58h1M1454 63h1M1454 67h1M1454 72h1M1454 77h1M1454 81h1M1454 86h1M1454 90h1M1454 95h1M1454 100h1M1454 104h1M1454 109h1M1454 114h1M1454 118h1M1454 123h1M1454 128h1M1454 132h1M1454 137h1M1454 142h1M1454 146h1M1454 151h1M1454 155h1M1454 160h1M1454 165h1M1454 169h1M1454 174h1M1454 179h1M1454 183h1M1454 188h1M1454 193h1M1454 197h1M1454 202h1M1454 206h1M1454 211h1M1454 216h1M1454 220h1M1454 225h1M1454 230h1M1454 234h1M1454 239h1M1454 244h1M1454 248h1M1454 253h1M1454 258h1M1454 262h1M1454 271h1M1454 276h1M1454 281h1M1454 285h1M1454 292h1M1454 297h1M1454 301h1M1454 306h1M1454 311h1M1454 315h1M1454 320h1M1454 324h1M1454 329h1M1454 334h1M1454 338h1M1454 343h1M1454 348h1M1454 352h1M1454 357h1M1454 362h1M1454 366h1M1454 371h1M1454 376h1M1454 380h1M1454 385h1M1454 389h1M1454 394h1M1454 399h1M1454 403h1M1454 408h1M1454 413h1M1454 417h1M1454 422h1M1454 427h1M1454 436h1M1454 440h1M1454 445h1M1454 450h1M1454 454h1M1454 459h1M1454 464h1M1454 468h1M1454 473h1M1454 478h1M1454 482h1M1454 487h1M1454 492h1M1454 496h1M1454 501h1M1454 505h1M1454 510h1M1454 515h1M1454 519h1M1454 526h1M1454 531h1M1454 535h1M1454 540h1M1454 545h1M1454 549h1M1454 554h1M1454 558h1M1454 563h1M1454 568h1M1454 572h1M1454 577h1M1454 582h1M1454 586h1M1454 591h1M1454 596h1M1454 600h1M1454 605h1M1454 610h1M1454 614h1M1454 619h1M1454 623h1M1454 628h1M1454 633h1M1454 637h1M1454 642h1M1454 647h1M1454 651h1M1454 656h1M1454 661h1M1454 665h1M1454 670h1M1454 674h1M1454 679h1M1454 684h1M1454 688h1M1454 693h1M1454 698h1M1454 702h1M1454 707h1M1454 712h1M1454 716h1M1454 721h1M1454 726h1M1454 730h1M1454 739h1M1454 744h1M1454 749h1M1454 753h1M1454 763h1M1454 767h1M1454 772h1M1454 777h1M1454 781h1M1454 786h1M1454 791h1M1454 795h1M1454 800h1M1454 805h1M1454 809h1M1454 814h1M1454 819h1M1454 823h1M1454 828h1M1454 833h1M1454 837h1M1454 842h1M1454 847h1M1454 851h1M1454 856h1M1454 861h1M1454 865h1M1454 870h1M1454 875h1M1454 879h1M1454 884h1M1454 889h1M1454 898h1M1454 903h1M1454 907h1M1454 912h1M1454 917h1M1454 921h1M1454 926h1M1454 931h1M1454 935h1M1454 940h1M1454 945h1M1454 949h1M1454 954h1M1454 959h1M1454 963h1M1454 968h1M1454 972h1M1454 977h1M1454 982h1M1454 986h1M1454 991h1M1489 58h1M1489 81h1M1489 104h1M1489 128h1M1489 151h1M1489 174h1M1489 197h1M1489 220h1M1489 244h1M1489 292h1M1489 315h1M1489 338h1M1489 362h1M1489 385h1M1489 408h1M1489 454h1M1489 478h1M1489 501h1M1489 526h1M1489 549h1M1489 572h1M1489 596h1M1489 619h1M1489 642h1M1489 665h1M1489 688h1M1489 712h1M1489 777h1M1489 800h1M1489 823h1M1489 847h1M1489 870h1M1489 917h1M1489 940h1M1489 963h1M1489 986h1M1524 58h1M1524 81h1M1524 104h1M1524 128h1M1524 151h1M1524 174h1M1524 197h1M1524 220h1M1524 244h1M1524 292h1M1524 315h1M1524 338h1M1524 362h1M1524 385h1M1524 408h1M1524 454h1M1524 478h1M1524 501h1M1524 526h1M1524 549h1M1524 572h1M1524 596h1M1524 619h1M1524 642h1M1524 665h1M1524 688h1M1524 712h1M1524 777h1M1524 800h1M1524 823h1M1524 847h1M1524 870h1M1524 917h1M1524 940h1M1524 963h1M1524 986h1M1559 58h1M1559 81h1M1559 104h1M1559 128h1M1559 151h1M1559 174h1M1559 197h1M1559 220h1M1559 244h1M1559 292h1M1559 315h1M1559 338h1M1559 362h1M1559 385h1M1559 408h1M1559 454h1M1559 478h1M1559 501h1M1559 526h1M1559 549h1M1559 572h1M1559 596h1M1559 619h1M1559 642h1M1559 665h1M1559 688h1M1559 712h1M1559 777h1M1559 800h1M1559 823h1M1559 847h1M1559 870h1M1559 917h1M1559 940h1M1559 963h1M1559 986h1M1594 58h1M1594 81h1M1594 104h1M1594 128h1M1594 151h1M1594 174h1M1594 197h1M1594 220h1M1594 244h1M1594 292h1M1594 315h1M1594 338h1M1594 362h1M1594 385h1M1594 408h1M1594 454h1M1594 478h1M1594 501h1M1594 526h1M1594 549h1M1594 572h1M1594 596h1M1594 619h1M1594 642h1M1594 665h1M1594 688h1M1594 712h1M1594 777h1M1594 800h1M1594 823h1M1594 847h1M1594 870h1M1594 917h1M1594 940h1M1594 963h1M1594 986h1M1629 58h1M1629 63h1M1629 67h1M1629 72h1M1629 77h1M1629 81h1M1629 86h1M1629 90h1M1629 95h1M1629 100h1M1629 104h1M1629 109h1M1629 114h1M1629 118h1M1629 123h1M1629 128h1M1629 132h1M1629 137h1M1629 142h1M1629 146h1M1629 151h1M1629 155h1M1629 160h1M1629 165h1M1629 169h1M1629 174h1M1629 179h1M1629 183h1M1629 188h1M1629 193h1M1629 197h1M1629 202h1M1629 206h1M1629 211h1M1629 216h1M1629 220h1M1629 225h1M1629 230h1M1629 234h1M1629 239h1M1629 244h1M1629 248h1M1629 253h1M1629 258h1M1629 262h1M1629 271h1M1629 276h1M1629 281h1M1629 285h1M1629 292h1M1629 297h1M1629 301h1M1629 306h1M1629 311h1M1629 315h1M1629 320h1M1629 324h1M1629 329h1M1629 334h1M1629 338h1M1629 343h1M1629 348h1M1629 352h1M1629 357h1M1629 362h1M1629 366h1M1629 371h1M1629 376h1M1629 380h1M1629 385h1M1629 389h1M1629 394h1M1629 399h1M1629 403h1M1629 408h1M1629 413h1M1629 417h1M1629 422h1M1629 427h1M1629 436h1M1629 440h1M1629 445h1M1629 450h1M1629 454h1M1629 459h1M1629 464h1M1629 468h1M1629 473h1M1629 478h1M1629 482h1M1629 487h1M1629 492h1M1629 496h1M1629 501h1M1629 505h1M1629 510h1M1629 515h1M1629 519h1M1629 526h1M1629 531h1M1629 535h1M1629 540h1M1629 545h1M1629 549h1M1629 554h1M1629 558h1M1629 563h1M1629 568h1M1629 572h1M1629 577h1M1629 582h1M1629 586h1M1629 591h1M1629 596h1M1629 600h1M1629 605h1M1629 610h1M1629 614h1M1629 619h1M1629 623h1M1629 628h1M1629 633h1M1629 637h1M1629 642h1M1629 647h1M1629 651h1M1629 656h1M1629 661h1M1629 665h1M1629 670h1M1629 674h1M1629 679h1M1629 684h1M1629 688h1M1629 693h1M1629 698h1M1629 702h1M1629 707h1M1629 712h1M1629 716h1M1629 721h1M1629 726h1M1629 730h1M1629 739h1M1629 744h1M1629 749h1M1629 753h1M1629 763h1M1629 767h1M1629 772h1M1629 777h1M1629 781h1M1629 786h1M1629 791h1M1629 795h1M1629 800h1M1629 805h1M1629 809h1M1629 814h1M1629 819h1M1629 823h1M1629 828h1M1629 833h1M1629 837h1M1629 842h1M1629 847h1M1629 851h1M1629 856h1M1629 861h1M1629 865h1M1629 870h1M1629 875h1M1629 879h1M1629 884h1M1629 889h1M1629 898h1M1629 903h1M1629 907h1M1629 912h1M1629 917h1M1629 921h1M1629 926h1M1629 931h1M1629 935h1M1629 940h1M1629 945h1M1629 949h1M1629 954h1M1629 959h1M1629 963h1M1629 968h1M1629 972h1M1629 977h1M1629 982h1M1629 986h1M1629 991h1M1664 58h1M1664 81h1M1664 104h1M1664 128h1M1664 151h1M1664 174h1M1664 197h1M1664 220h1M1664 244h1M1664 292h1M1664 315h1M1664 338h1M1664 362h1M1664 385h1M1664 408h1M1664 454h1M1664 478h1M1664 501h1M1664 526h1M1664 549h1M1664 572h1M1664 596h1M1664 619h1M1664 642h1M1664 665h1M1664 688h1M1664 712h1M1664 777h1M1664 800h1M1664 823h1M1664 847h1M1664 870h1M1664 917h1M1664 940h1M1664 963h1M1664 986h1M1699 58h1M1699 81h1M1699 104h1M1699 128h1M1699 151h1M1699 174h1M1699 197h1M1699 220h1M1699 244h1M1699 292h1M1699 315h1M1699 338h1M1699 362h1M1699 385h1M1699 408h1M1699 454h1M1699 478h1M1699 501h1M1699 526h1M1699 549h1M1699 572h1M1699 596h1M1699 619h1M1699 642h1M1699 665h1M1699 688h1M1699 712h1M1699 777h1M1699 800h1M1699 823h1M1699 847h1M1699 870h1M1699 917h1M1699 940h1M1699 963h1M1699 986h1M1734 58h1M1734 81h1M1734 104h1M1734 128h1M1734 151h1M1734 174h1M1734 197h1M1734 220h1M1734 244h1M1734 292h1M1734 315h1M1734 338h1M1734 362h1M1734 385h1M1734 408h1M1734 454h1M1734 478h1M1734 501h1M1734 526h1M1734 549h1M1734 572h1M1734 596h1M1734 619h1M1734 642h1M1734 665h1M1734 688h1M1734 712h1M1734 777h1M1734 800h1M1734 823h1M1734 847h1M1734 870h1M1734 917h1M1734 940h1M1734 963h1M1734 986h1' stroke='#c4c4c4' stroke-width='1' fill='none' shape-rendering='crispEdges' transform='translate(0,0.5)'/><path d='M55.5 96v4M55.5 105v5M55.5 115v5M55.5 125v5M55.5 135v5M55.5 145v5M55.5 155v5M55.5 165v5M55.5 175v5M55.5 185v5M55.5 195v5M55.5 205v5M55.5 215v5M55.5 225v5M55.5 235v5M55.5 245v5M55.5 255v5M55.5 265v5M55.5 275v5M55.5 285v5M55.5 292v2M55.5 299v5M55.5 309v5M55.5 319v5M55.5 329v5M55.5 339v5M55.5 349v5M55.5 359v5M55.5 369v5M55.5 379v5M55.5 389v5M55.5 399v5M55.5 409v5M55.5 419v5M55.5 429v5M55.5 439v5M55.5 449v5M55.5 459v5M55.5 469v5M55.5 479v5M55.5 489v5M55.5 499v5M55.5 509v5M55.5 519v5M55.5 526v2M55.5 533v5M55.5 543v5M55.5 553v5M55.5 563v5M55.5 573v5M55.5 583v5M55.5 593v5M55.5 603v5M55.5 613v5M55.5 623v5M55.5 633v5M55.5 643v5M55.5 653v5M55.5 663v5M55.5 673v5M55.5 683v5M55.5 693v5M55.5 703v5M55.5 713v5M55.5 723v5M55.5 733v5M55.5 743v5M55.5 753v5M55.5 760v2M55.5 767v5M55.5 777v5M55.5 787v5M55.5 797v5M55.5 807v5M55.5 817v5M55.5 827v5M55.5 837v5M55.5 847v5M55.5 857v5M55.5 867v5M55.5 877v5M55.5 887v5M55.5 897v5M55.5 907v5M55.5 917v5M55.5 927v5M55.5 937v5M55.5 947v5M55.5 957v5M55.5 967v5M55.5 977v5M55.5 987v5' stroke='#c6c6c6' stroke-width='1' fill='none' shape-rendering='crispEdges'/><path d='M3 267.5h5M13 267.5h5M23 267.5h5M33 267.5h5M43 267.5h5M53 267.5h5M63 267.5h5M73 267.5h5M83 267.5h5M93 267.5h5M103 267.5h5M113 267.5h5M123 267.5h5M133 267.5h5M143 267.5h5M153 267.5h5M163 267.5h5M173 267.5h5M183 267.5h5M193 267.5h5M203 267.5h5M213 267.5h5M223 267.5h5M233 267.5h5M243 267.5h5M253 267.5h5M263 267.5h5M273 267.5h5M283 267.5h5M293 267.5h5M303 267.5h5M313 267.5h5M323 267.5h5M333 267.5h5M343 267.5h5M353 267.5h5M363 267.5h5M373 267.5h5M383 267.5h5M393 267.5h5M403 267.5h5M413 267.5h5M423 267.5h5M433 267.5h5M443 267.5h5M453 267.5h5M463 267.5h5M473 267.5h5M483 267.5h5M493 267.5h5M503 267.5h5M513 267.5h5M523 267.5h5M533 267.5h5M543 267.5h5M553 267.5h5M563 267.5h5M573 267.5h5M583 267.5h5M593 267.5h5M603 267.5h5M613 267.5h5M623 267.5h5M633 267.5h5M643 267.5h5M653 267.5h5M663 267.5h5M673 267.5h5M683 267.5h5M693 267.5h5M703 267.5h5M713 267.5h5M723 267.5h5M733 267.5h5M743 267.5h5M753 267.5h5M763 267.5h5M773 267.5h5M783 267.5h5M793 267.5h5M803 267.5h5M813 267.5h5M823 267.5h5M833 267.5h5M843 267.5h5M853 267.5h5M863 267.5h5M873 267.5h5M883 267.5h5M893 267.5h5M903 267.5h5M913 267.5h5M923 267.5h5M933 267.5h5M943 267.5h5M953 267.5h5M963 267.5h5M973 267.5h5M983 267.5h5M993 267.5h5M1003 267.5h5M1013 267.5h5M1023 267.5h5M1033 267.5h5M1043 267.5h5M1053 267.5h5M1063 267.5h5M1073 267.5h5M1083 267.5h5M1093 267.5h5M1103 267.5h5M1113 267.5h5M1123 267.5h5M1133 267.5h5M1143 267.5h5M1153 267.5h5M1163 267.5h5M1173 267.5h5M1183 267.5h5M1193 267.5h5M1203 267.5h5M1213 267.5h5M1223 267.5h5M1233 267.5h5M1243 267.5h5M1253 267.5h5M1263 267.5h5M1273 267.5h5M1283 267.5h5M1293 267.5h5M1303 267.5h5M1313 267.5h5M1323 267.5h5M1333 267.5h5M1343 267.5h5M1353 267.5h5M1363 267.5h5M1373 267.5h5M1383 267.5h5M1393 267.5h5M1403 267.5h5M1413 267.5h5M1423 267.5h5M1433 267.5h5M1443 267.5h5M1453 267.5h5M1463 267.5h5M1473 267.5h5M1483 267.5h5M1493 267.5h5M1503 267.5h5M1513 267.5h5M1523 267.5h5M1533 267.5h5M1543 267.5h5M1553 267.5h5M1563 267.5h5M1573 267.5h5M1583 267.5h5M1593 267.5h5M1603 267.5h5M1613 267.5h5M1623 267.5h5M1633 267.5h5M1643 267.5h5M1653 267.5h5M1663 267.5h5M1673 267.5h5M1683 267.5h5M1693 267.5h5M1703 267.5h5M1713 267.5h5M3 431.5h5M13 431.5h5M23 431.5h5M33 431.5h5M43 431.5h5M53 431.5h5M63 431.5h5M73 431.5h5M83 431.5h5M93 431.5h5M103 431.5h5M113 431.5h5M123 431.5h5M133 431.5h5M143 431.5h5M153 431.5h5M163 431.5h5M173 431.5h5M183 431.5h5M193 431.5h5M203 431.5h5M213 431.5h5M223 431.5h5M233 431.5h5M243 431.5h5M253 431.5h5M263 431.5h5M273 431.5h5M283 431.5h5M293 431.5h5M303 431.5h5M313 431.5h5M323 431.5h5M333 431.5h5M343 431.5h5M353 431.5h5M363 431.5h5M373 431.5h5M383 431.5h5M393 431.5h5M403 431.5h5M413 431.5h5M423 431.5h5M433 431.5h5M443 431.5h5M453 431.5h5M463 431.5h5M473 431.5h5M483 431.5h5M493 431.5h5M503 431.5h5M513 431.5h5M523 431.5h5M533 431.5h5M543 431.5h5M553 431.5h5M563 431.5h5M573 431.5h5M583 431.5h5M593 431.5h5M603 431.5h5M613 431.5h5M623 431.5h5M633 431.5h5M643 431.5h5M653 431.5h5M663 431.5h5M673 431.5h5M683 431.5h5M693 431.5h5M703 431.5h5M713 431.5h5M723 431.5h5M733 431.5h5M743 431.5h5M753 431.5h5M763 431.5h5M773 431.5h5M783 431.5h5M793 431.5h5M803 431.5h5M813 431.5h5M823 431.5h5M833 431.5h5M843 431.5h5M853 431.5h5M863 431.5h5M873 431.5h5M883 431.5h5M893 431.5h5M903 431.5h5M913 431.5h5M923 431.5h5M933 431.5h5M943 431.5h5M953 431.5h5M963 431.5h5M973 431.5h5M983 431.5h5M993 431.5h5M1003 431.5h5M1013 431.5h5M1023 431.5h5M1033 431.5h5M1043 431.5h5M1053 431.5h5M1063 431.5h5M1073 431.5h5M1083 431.5h5M1093 431.5h5M1103 431.5h5M1113 431.5h5M1123 431.5h5M1133 431.5h5M1143 431.5h5M1153 431.5h5M1163 431.5h5M1173 431.5h5M1183 431.5h5M1193 431.5h5M1203 431.5h5M1213 431.5h5M1223 431.5h5M1233 431.5h5M1243 431.5h5M1253 431.5h5M1263 431.5h5M1273 431.5h5M1283 431.5h5M1293 431.5h5M1303 431.5h5M1313 431.5h5M1323 431.5h5M1333 431.5h5M1343 431.5h5M1353 431.5h5M1363 431.5h5M1373 431.5h5M1383 431.5h5M1393 431.5h5M1403 431.5h5M1413 431.5h5M1423 431.5h5M1433 431.5h5M1443 431.5h5M1453 431.5h5M1463 431.5h5M1473 431.5h5M1483 431.5h5M1493 431.5h5M1503 431.5h5M1513 431.5h5M1523 431.5h5M1533 431.5h5M1543 431.5h5M1553 431.5h5M1563 431.5h5M1573 431.5h5M1583 431.5h5M1593 431.5h5M1603 431.5h5M1613 431.5h5M1623 431.5h5M1633 431.5h5M1643 431.5h5M1653 431.5h5M1663 431.5h5M1673 431.5h5M1683 431.5h5M1693 431.5h5M1703 431.5h5M1713 431.5h5M3 735.5h5M13 735.5h5M23 735.5h5M33 735.5h5M43 735.5h5M53 735.5h5M63 735.5h5M73 735.5h5M83 735.5h5M93 735.5h5M103 735.5h5M113 735.5h5M123 735.5h5M133 735.5h5M143 735.5h5M153 735.5h5M163 735.5h5M173 735.5h5M183 735.5h5M193 735.5h5M203 735.5h5M213 735.5h5M223 735.5h5M233 735.5h5M243 735.5h5M253 735.5h5M263 735.5h5M273 735.5h5M283 735.5h5M293 735.5h5M303 735.5h5M313 735.5h5M323 735.5h5M333 735.5h5M343 735.5h5M353 735.5h5M363 735.5h5M373 735.5h5M383 735.5h5M393 735.5h5M403 735.5h5M413 735.5h5M423 735.5h5M433 735.5h5M443 735.5h5M453 735.5h5M463 735.5h5M473 735.5h5M483 735.5h5M493 735.5h5M503 735.5h5M513 735.5h5M523 735.5h5M533 735.5h5M543 735.5h5M553 735.5h5M563 735.5h5M573 735.5h5M583 735.5h5M593 735.5h5M603 735.5h5M613 735.5h5M623 735.5h5M633 735.5h5M643 735.5h5M653 735.5h5M663 735.5h5M673 735.5h5M683 735.5h5M693 735.5h5M703 735.5h5M713 735.5h5M723 735.5h5M733 735.5h5M743 735.5h5M753 735.5h5M763 735.5h5M773 735.5h5M783 735.5h5M793 735.5h5M803 735.5h5M813 735.5h5M823 735.5h5M833 735.5h5M843 735.5h5M853 735.5h5M863 735.5h5M873 735.5h5M883 735.5h5M893 735.5h5M903 735.5h5M913 735.5h5M923 735.5h5M933 735.5h5M943 735.5h5M953 735.5h5M963 735.5h5M973 735.5h5M983 735.5h5M993 735.5h5M1003 735.5h5M1013 735.5h5M1023 735.5h5M1033 735.5h5M1043 735.5h5M1053 735.5h5M1063 735.5h5M1073 735.5h5M1083 735.5h5M1093 735.5h5M1103 735.5h5M1113 735.5h5M1123 735.5h5M1133 735.5h5M1143 735.5h5M1153 735.5h5M1163 735.5h5M1173 735.5h5M1183 735.5h5M1193 735.5h5M1203 735.5h5M1213 735.5h5M1223 735.5h5M1233 735.5h5M1243 735.5h5M1253 735.5h5M1263 735.5h5M1273 735.5h5M1283 735.5h5M1293 735.5h5M1303 735.5h5M1313 735.5h5M1323 735.5h5M1333 735.5h5M1343 735.5h5M1353 735.5h5M1363 735.5h5M1373 735.5h5M1383 735.5h5M1393 735.5h5M1403 735.5h5M1413 735.5h5M1423 735.5h5M1433 735.5h5M1443 735.5h5M1453 735.5h5M1463 735.5h5M1473 735.5h5M1483 735.5h5M1493 735.5h5M1503 735.5h5M1513 735.5h5M1523 735.5h5M1533 735.5h5M1543 735.5h5M1553 735.5h5M1563 735.5h5M1573 735.5h5M1583 735.5h5M1593 735.5h5M1603 735.5h5M1613 735.5h5M1623 735.5h5M1633 735.5h5M1643 735.5h5M1653 735.5h5M1663 735.5h5M1673 735.5h5M1683 735.5h5M1693 735.5h5M1703 735.5h5M1713 735.5h5M3 893.5h5M13 893.5h5M23 893.5h5M33 893.5h5M43 893.5h5M53 893.5h5M63 893.5h5M73 893.5h5M83 893.5h5M93 893.5h5M103 893.5h5M113 893.5h5M123 893.5h5M133 893.5h5M143 893.5h5M153 893.5h5M163 893.5h5M173 893.5h5M183 893.5h5M193 893.5h5M203 893.5h5M213 893.5h5M223 893.5h5M233 893.5h5M243 893.5h5M253 893.5h5M263 893.5h5M273 893.5h5M283 893.5h5M293 893.5h5M303 893.5h5M313 893.5h5M323 893.5h5M333 893.5h5M343 893.5h5M353 893.5h5M363 893.5h5M373 893.5h5M383 893.5h5M393 893.5h5M403 893.5h5M413 893.5h5M423 893.5h5M433 893.5h5M443 893.5h5M453 893.5h5M463 893.5h5M473 893.5h5M483 893.5h5M493 893.5h5M503 893.5h5M513 893.5h5M523 893.5h5M533 893.5h5M543 893.5h5M553 893.5h5M563 893.5h5M573 893.5h5M583 893.5h5M593 893.5h5M603 893.5h5M613 893.5h5M623 893.5h5M633 893.5h5M643 893.5h5M653 893.5h5M663 893.5h5M673 893.5h5M683 893.5h5M693 893.5h5M703 893.5h5M713 893.5h5M723 893.5h5M733 893.5h5M743 893.5h5M753 893.5h5M763 893.5h5M773 893.5h5M783 893.5h5M793 893.5h5M803 893.5h5M813 893.5h5M823 893.5h5M833 893.5h5M843 893.5h5M853 893.5h5M863 893.5h5M873 893.5h5M883 893.5h5M893 893.5h5M903 893.5h5M913 893.5h5M923 893.5h5M933 893.5h5M943 893.5h5M953 893.5h5M963 893.5h5M973 893.5h5M983 893.5h5M993 893.5h5M1003 893.5h5M1013 893.5h5M1023 893.5h5M1033 893.5h5M1043 893.5h5M1053 893.5h5M1063 893.5h5M1073 893.5h5M1083 893.5h5M1093 893.5h5M1103 893.5h5M1113 893.5h5M1123 893.5h5M1133 893.5h5M1143 893.5h5M1153 893.5h5M1163 893.5h5M1173 893.5h5M1183 893.5h5M1193 893.5h5M1203 893.5h5M1213 893.5h5M1223 893.5h5M1233 893.5h5M1243 893.5h5M1253 893.5h5M1263 893.5h5M1273 893.5h5M1283 893.5h5M1293 893.5h5M1303 893.5h5M1313 893.5h5M1323 893.5h5M1333 893.5h5M1343 893.5h5M1353 893.5h5M1363 893.5h5M1373 893.5h5M1383 893.5h5M1393 893.5h5M1403 893.5h5M1413 893.5h5M1423 893.5h5M1433 893.5h5M1443 893.5h5M1453 893.5h5M1463 893.5h5M1473 893.5h5M1483 893.5h5M1493 893.5h5M1503 893.5h5M1513 893.5h5M1523 893.5h5M1533 893.5h5M1543 893.5h5M1553 893.5h5M1563 893.5h5M1573 893.5h5M1583 893.5h5M1593 893.5h5M1603 893.5h5M1613 893.5h5M1623 893.5h5M1633 893.5h5M1643 893.5h5M1653 893.5h5M1663 893.5h5M1673 893.5h5M1683 893.5h5M1693 893.5h5M1703 893.5h5M1713 893.5h5' stroke='#c6c6c6' stroke-width='1' fill='none' shape-rendering='crispEdges'/><defs><clipPath id='c40'><rect x='1700' y='70' width='26.7' height='24'/><rect x='1744.4' y='70' width='7' height='10.2'/></clipPath></defs><rect x='1717.0' y='74.5' width='30.3' height='14' fill='#000'/><rect x='1717.0' y='97.7' width='30.3' height='14' fill='#000'/><rect x='1717.0' y='120.9' width='30.3' height='14' fill='#000'/><rect x='1717.0' y='144.1' width='30.3' height='14' fill='#000'/><rect x='1717.0' y='167.3' width='30.3' height='14' fill='#000'/><rect x='1717.0' y='190.5' width='30.3' height='14' fill='#000'/><rect x='1717.0' y='213.7' width='30.3' height='14' fill='#000'/><rect x='1724.6' y='236.9' width='22.7' height='14' fill='#000'/><rect x='1724.6' y='260.1' width='22.7' height='14' fill='#000'/><rect x='1724.6' y='308.6' width='22.7' height='14' fill='#000'/><rect x='1697.7' y='331.8' width='49.6' height='14' fill='#000'/><rect x='1697.7' y='355.0' width='49.6' height='14' fill='#000'/><rect x='1697.7' y='378.2' width='49.6' height='14' fill='#000'/><rect x='1697.7' y='401.4' width='49.6' height='14' fill='#000'/><rect x='1724.6' y='424.6' width='22.7' height='14' fill='#000'/><rect x='1693.4' y='447.8' width='53.9' height='14' fill='#000'/><rect x='1693.4' y='471.0' width='53.9' height='14' fill='#000'/><rect x='1693.4' y='494.2' width='53.9' height='14' fill='#000'/><rect x='1671.9' y='542.8' width='75.4' height='14' fill='#000'/><rect x='1671.9' y='566.0' width='75.4' height='14' fill='#000'/><rect x='1671.9' y='589.2' width='75.4' height='14' fill='#000'/><rect x='1671.9' y='612.4' width='75.4' height='14' fill='#000'/><rect x='1671.9' y='635.6' width='75.4' height='14' fill='#000'/><rect x='1671.9' y='658.8' width='75.4' height='14' fill='#000'/><rect x='1671.9' y='682.0' width='75.4' height='14' fill='#000'/><rect x='1679.5' y='705.2' width='67.8' height='14' fill='#000'/><rect x='1725.5' y='728.4' width='21.8' height='14' fill='#000'/><rect x='1682.7' y='770.7' width='64.6' height='14' fill='#000'/><rect x='1682.7' y='794.0' width='64.6' height='14' fill='#000'/><rect x='1682.7' y='817.3' width='64.6' height='14' fill='#000'/><rect x='1682.7' y='840.6' width='64.6' height='14' fill='#000'/><rect x='1682.7' y='863.9' width='64.6' height='14' fill='#000'/><rect x='1724.6' y='887.2' width='22.7' height='14' fill='#000'/><rect x='1678.3' y='910.5' width='69.0' height='14' fill='#000'/><rect x='1678.3' y='933.8' width='69.0' height='14' fill='#000'/><rect x='1678.3' y='957.1' width='69.0' height='14' fill='#000'/><rect x='40.9' y='978' width='29.4' height='15' fill='#000'/><rect x='211.9' y='978' width='37.2' height='15' fill='#000'/><rect x='386.8' y='978' width='37.2' height='15' fill='#000'/><rect x='557.7' y='978' width='45.0' height='15' fill='#000'/><rect x='732.6' y='978' width='45.0' height='15' fill='#000'/><rect x='907.5' y='978' width='45.0' height='15' fill='#000'/><rect x='1082.3' y='978' width='45.0' height='15' fill='#000'/><rect x='1257.2' y='978' width='45.0' height='15' fill='#000'/><rect x='1432.1' y='978' width='45.0' height='15' fill='#000'/><rect x='1607.0' y='978' width='45.0' height='15' fill='#000'/><polyline points='3.0,265.5 55.0,265.5 55.5,263.0 56.0,267.0 57.0,265.0 60.0,266.0 70.0,265.8 100.0,266.0 143.3,265.5 144.2,269.5 144.7,257.5 146.7,256.7 148.0,259.0 150.0,258.7 155.0,253.3 155.8,250.0 157.5,251.3 163.3,247.5 165.8,243.3 169.2,240.5 171.7,239.7 173.0,241.3 178.3,238.7 188.3,234.5 196.7,231.7 205.0,229.3 213.3,227.5 221.7,225.8 230.0,224.5 241.7,222.5 251.7,221.3 261.7,220.5 273.3,220.0 279.2,219.2 280.8,215.5 287.5,215.5 288.3,222.5 288.7,217.0 305.8,216.7 307.5,219.2 312.5,219.2 313.3,218.3 321.7,218.3 323.3,222.5 329.2,222.2 329.5,218.0 330.0,220.3 366.7,220.3 367.5,218.3 373.3,218.3 374.2,220.8 380.0,222.2 390.0,225.3 401.7,229.2 405.0,229.7 410.8,227.5 414.2,227.5 415.8,228.7 443.3,228.3 446.7,225.8 455.5,225.6 457.0,226.5 508.7,226.3 512.0,225.6 524.0,225.6 526.0,226.5 543.0,226.3 550.0,225.6 704.6,225.6 708.0,226.3 806.0,226.6 828.0,227.5 849.0,228.9 880.0,230.9 904.0,233.7 928.0,237.1 948.6,241.9 969.0,246.7 990.0,250.2 1017.0,252.6 1045.0,254.3 1069.0,255.0 1100.0,255.5 1158.7,256.8 1248.0,257.8 1351.0,259.2 1372.0,258.2 1382.0,256.8 1390.7,257.5 1392.4,259.6 1444.0,259.9 1445.7,257.8 1450.8,257.8 1452.5,258.9 1538.5,259.2 1540.9,261.3 1547.0,260.9 1548.8,260.2 1562.5,260.2 1566.0,264.0 1572.8,264.0 1574.5,260.9 1576.3,259.6 1583.0,259.6 1584.8,260.9 1693.0,261.3 1695.5,257.5 1702.7,257.5 1703.4,265.0 1704.0,259.2 1729.0,259.6 1732.6,263.7 1737.8,262.0 1739.5,265.4 1744.6,264.4 1751.0,265.4' fill='none' stroke='#f4e932' stroke-width='1' stroke-linejoin='round' shape-rendering='crispEdges'/><polyline points='3.0,430.7 340.0,430.7 359.8,429.9 371.7,428.3 379.6,424.3 387.5,415.6 395.4,405.7 401.4,399.0 407.3,397.0 413.2,396.3 617.0,396.3 625.0,397.0 684.4,397.4 735.9,398.6 775.5,399.8 815.0,401.0 854.6,403.0 894.2,406.9 922.0,410.9 933.8,414.0 949.6,418.8 965.5,422.8 981.3,425.9 1001.0,427.9 1021.0,429.5 1052.6,430.3 1100.0,430.7 1751.0,430.9' fill='none' stroke='#8ccb2e' stroke-width='1' stroke-linejoin='round' shape-rendering='crispEdges'/><polyline points='3.0,734.5 55.0,734.5 55.5,733.5 230.0,689.5 405.0,650.0 580.0,617.5 755.0,591.0 930.0,570.5 1016.5,562.7 1103.8,557.4 1191.0,553.3 1278.5,550.2 1325.5,549.4 1455.4,549.4 1513.6,551.1 1580.8,553.3 1630.0,555.1 1683.8,558.2 1751.0,561.0' fill='none' stroke='#f58a1e' stroke-width='1' stroke-linejoin='round' shape-rendering='crispEdges'/><polyline points='3.0,895.7 54.9,895.7 56.0,881.2 56.5,908.3 57.2,895.0 58.3,897.5 60.0,895.5 62.0,897.5 64.0,896.0 80.0,896.1 108.7,897.7 143.0,899.1 144.3,887.0 144.7,923.6 146.5,915.6 147.7,906.5 150.0,900.7 154.6,900.7 155.7,913.3 156.4,903.0 163.7,902.3 164.9,912.2 167.2,914.5 171.8,912.9 172.9,905.3 175.2,903.7 177.5,905.3 200.4,902.6 230.2,901.4 278.3,901.4 280.1,913.3 287.5,912.9 288.2,892.7 288.9,908.3 305.8,908.3 307.0,900.0 315.0,902.3 321.9,903.7 323.0,889.3 328.7,890.0 329.4,903.7 330.1,895.0 349.4,896.1 366.5,895.0 367.7,901.4 372.3,899.6 373.4,895.0 383.7,881.2 399.4,862.0 402.0,853.3 409.7,846.8 410.7,852.3 415.5,849.1 416.5,844.9 428.4,837.8 446.2,830.7 446.8,838.5 460.7,828.1 483.3,817.8 509.2,808.7 523.7,804.9 526.9,801.6 547.9,797.1 580.2,790.0 606.0,786.1 638.3,784.5 670.6,784.5 702.9,786.1 735.2,790.0 767.5,797.4 793.3,806.2 815.9,818.4 838.5,832.0 864.3,852.3 883.7,872.7 903.1,893.3 922.5,913.7 932.1,924.3 948.3,934.0 964.4,939.5 983.8,942.7 1000.0,944.4 1030.0,947.3 1110.0,949.7 1230.6,951.3 1310.8,952.9 1369.0,954.1 1371.0,958.1 1377.0,954.1 1383.0,954.1 1385.0,958.1 1387.0,954.1 1391.0,952.9 1392.2,948.0 1393.4,950.9 1443.0,953.7 1445.0,962.1 1451.0,960.1 1539.4,960.5 1540.6,952.9 1551.5,957.3 1561.5,958.1 1565.5,948.9 1571.5,948.9 1572.7,961.3 1573.9,953.7 1576.3,962.1 1582.7,963.3 1583.5,956.9 1587.5,959.3 1695.8,958.9 1697.0,968.1 1701.8,968.1 1703.0,948.9 1704.3,964.1 1720.0,962.1 1732.0,958.1 1736.0,954.1 1738.0,959.3 1740.0,943.3 1744.0,944.9 1746.0,956.9 1748.0,948.1 1751.0,949.3' fill='none' stroke='#7a3196' stroke-width='1' stroke-linejoin='round' shape-rendering='crispEdges'/><text clip-path='url(#c40)' x='1746.3' y='86.0' text-anchor='end' font-size='12.0' fill='#f4e932'>40 V</text><text x='1746.3' y='109.2' text-anchor='end' font-size='12.0' fill='#f4e932'>35 V</text><text x='1746.3' y='132.4' text-anchor='end' font-size='12.0' fill='#f4e932'>30 V</text><text x='1746.3' y='155.6' text-anchor='end' font-size='12.0' fill='#f4e932'>25 V</text><text x='1746.3' y='178.8' text-anchor='end' font-size='12.0' fill='#f4e932'>20 V</text><text x='1746.3' y='202.0' text-anchor='end' font-size='12.0' fill='#f4e932'>15 V</text><text x='1746.3' y='225.2' text-anchor='end' font-size='12.0' fill='#f4e932'>10 V</text><text x='1746.3' y='248.4' text-anchor='end' font-size='12.0' fill='#f4e932'>5 V</text><text x='1746.3' y='271.6' text-anchor='end' font-size='12.0' fill='#f4e932'>0 V</text><text x='1746.3' y='320.1' text-anchor='end' font-size='12.0' fill='#8ccb2e'>1 V</text><text x='1746.3' y='343.3' text-anchor='end' font-size='12.0' fill='#8ccb2e'>800 mV</text><text x='1746.3' y='366.5' text-anchor='end' font-size='12.0' fill='#8ccb2e'>600 mV</text><text x='1746.3' y='389.7' text-anchor='end' font-size='12.0' fill='#8ccb2e'>400 mV</text><text x='1746.3' y='412.9' text-anchor='end' font-size='12.0' fill='#8ccb2e'>200 mV</text><text x='1746.3' y='436.1' text-anchor='end' font-size='12.0' fill='#8ccb2e'>0 V</text><text x='1746.3' y='459.3' text-anchor='end' font-size='12.0' fill='#8ccb2e'>-200 mV</text><text x='1746.3' y='482.5' text-anchor='end' font-size='12.0' fill='#8ccb2e'>-400 mV</text><text x='1746.3' y='505.7' text-anchor='end' font-size='12.0' fill='#8ccb2e'>-600 mV</text><text x='1746.3' y='554.3' text-anchor='end' font-size='12.0' fill='#f58a1e'>532.046 mT</text><text x='1746.3' y='577.5' text-anchor='end' font-size='12.0' fill='#f58a1e'>465.540 mT</text><text x='1746.3' y='600.7' text-anchor='end' font-size='12.0' fill='#f58a1e'>399.034 mT</text><text x='1746.3' y='623.9' text-anchor='end' font-size='12.0' fill='#f58a1e'>332.529 mT</text><text x='1746.3' y='647.1' text-anchor='end' font-size='12.0' fill='#f58a1e'>266.023 mT</text><text x='1746.3' y='670.3' text-anchor='end' font-size='12.0' fill='#f58a1e'>199.517 mT</text><text x='1746.3' y='693.5' text-anchor='end' font-size='12.0' fill='#f58a1e'>133.011 mT</text><text x='1746.3' y='716.7' text-anchor='end' font-size='12.0' fill='#f58a1e'>66.506 mT</text><text x='1746.3' y='739.9' text-anchor='end' font-size='12.0' fill='#f58a1e'>0 T</text><text x='1746.3' y='782.2' text-anchor='end' font-size='12.0' fill='#863ca2'>851.735 A</text><text x='1746.3' y='805.5' text-anchor='end' font-size='12.0' fill='#863ca2'>681.388 A</text><text x='1746.3' y='828.8' text-anchor='end' font-size='12.0' fill='#863ca2'>511.041 A</text><text x='1746.3' y='852.1' text-anchor='end' font-size='12.0' fill='#863ca2'>340.694 A</text><text x='1746.3' y='875.4' text-anchor='end' font-size='12.0' fill='#863ca2'>170.347 A</text><text x='1746.3' y='898.7' text-anchor='end' font-size='12.0' fill='#863ca2'>0 A</text><text x='1746.3' y='922.0' text-anchor='end' font-size='12.0' fill='#863ca2'>-170.347 A</text><text x='1746.3' y='945.3' text-anchor='end' font-size='12.0' fill='#863ca2'>-340.694 A</text><text x='1746.3' y='968.6' text-anchor='end' font-size='12.0' fill='#863ca2'>-511.041 A</text><text x='55.3' y='987.1' text-anchor='middle' font-size='12' fill='#bdbdbd'>0 s</text><text x='230.2' y='987.1' text-anchor='middle' font-size='12' fill='#bdbdbd'>4 ms</text><text x='405.1' y='987.1' text-anchor='middle' font-size='12' fill='#bdbdbd'>8 ms</text><text x='579.9' y='987.1' text-anchor='middle' font-size='12' fill='#bdbdbd'>12 ms</text><text x='754.8' y='987.1' text-anchor='middle' font-size='12' fill='#bdbdbd'>16 ms</text><text x='929.7' y='987.1' text-anchor='middle' font-size='12' fill='#bdbdbd'>20 ms</text><text x='1104.5' y='987.1' text-anchor='middle' font-size='12' fill='#bdbdbd'>24 ms</text><text x='1279.4' y='987.1' text-anchor='middle' font-size='12' fill='#bdbdbd'>28 ms</text><text x='1454.3' y='987.1' text-anchor='middle' font-size='12' fill='#bdbdbd'>32 ms</text><text x='1629.2' y='987.1' text-anchor='middle' font-size='12' fill='#bdbdbd'>36 ms</text><path d='M1711.5 65 H1741.4 Q1744.3 65 1744.3 68 V97.6 Q1744 99.2 1742.5 97.8 L1710.6 66.5 Q1709.6 65 1711.5 65Z' fill='#4f4f4f'/><circle cx='1737.3' cy='71.6' r='3.7' fill='none' stroke='#a8a8a8' stroke-width='1.4'/><path d='M1734.4 74.6 L1728.2 80.6' stroke='#a8a8a8' stroke-width='2.4' stroke-linecap='round'/><text x='100.6' y='179.4' font-size='18.4' fill='#f4e932'>U_loop,coil</text><text x='100.4' y='413.3' font-size='18.4' letter-spacing='0.17' fill='#8ccb2e'>U_Photod</text><text x='52.6' y='741.7' font-size='25' letter-spacing='0.8' fill='#f58a1e'>B_t</text><text x='53.8' y='896.6' font-size='16.4' fill='#7a3196'>I_p</text><path d='M10.5 162 H77.2 L83 174.5 L77.2 187 H10.5 Q7 187 7 183.5 V165.5 Q7 162 10.5 162Z' fill='#1d1b08' stroke='#f4e932' stroke-width='2' stroke-linejoin='round'/><path d='M33 162 V187' stroke='#f4e932' stroke-width='2'/><text x='19.3' y='178.1' text-anchor='middle' font-family="'DejaVu Sans Condensed','DejaVu Sans','Liberation Sans',sans-serif" font-size='12' fill='#f4e932'>C 1</text><text x='57.6' y='178.1' text-anchor='middle' font-family="'DejaVu Sans Condensed','DejaVu Sans','Liberation Sans',sans-serif" font-size='12.3' fill='#f4e932'>20 V</text><path d='M10.5 396 H77.2 L83 408.3 L77.2 420.6 H10.5 Q7 420.6 7 417.1 V399.5 Q7 396 10.5 396Z' fill='#10150a' stroke='#8ccb2e' stroke-width='2' stroke-linejoin='round'/><path d='M33 396 V420.6' stroke='#8ccb2e' stroke-width='2'/><text x='19.3' y='411.9' text-anchor='middle' font-family="'DejaVu Sans Condensed','DejaVu Sans','Liberation Sans',sans-serif" font-size='12' fill='#8ccb2e'>C 4</text><text x='57.6' y='411.9' text-anchor='middle' font-family="'DejaVu Sans Condensed','DejaVu Sans','Liberation Sans',sans-serif" font-size='11.9' fill='#8ccb2e'>200 mV</text><path d='M10 722.8 H29 L41.6 735.0999999999999 L29 747.4 H10 Q6.8 747.4 6.8 744.1999999999999 V726.0 Q6.8 722.8 10 722.8Z' fill='#22150a' stroke='#f58a1e' stroke-width='1.4' stroke-linejoin='round'/><text x='23.6' y='738.7' text-anchor='middle' font-size='11.8' fill='#f58a1e'>M 1</text><path d='M10 880.6 H29 L41.6 892.9000000000001 L29 905.2 H10 Q6.8 905.2 6.8 902.0 V883.8000000000001 Q6.8 880.6 10 880.6Z' fill='#6f2c8f' stroke='#6f2c8f' stroke-width='1.4' stroke-linejoin='round'/><text x='23.6' y='896.5' text-anchor='middle' font-size='11.8' fill='#fff'>M 2</text><polygon points='45,58 65.6,58 55.3,68' fill='#f58a1e'/><path d='M46 69 H64.5 V88 H58.8 L55.3 94.4 L51.8 88 H46 Z' fill='#000' stroke='#f58a1e' stroke-width='2' stroke-linejoin='miter'/><text x='55.2' y='83.8' text-anchor='middle' font-family="'DejaVu Sans Condensed','DejaVu Sans','Liberation Sans',sans-serif" font-weight='bold' font-size='14.4' fill='#f58a1e'>T</text><path d='M593 36.5 H586.5 V53.5 H593 M1161 36.5 H1167.5 V53.5 H1161' fill='none' stroke='#ececec' stroke-width='1.3'/><path d='M587 45 H1167' stroke='#a9a9a9' stroke-width='2'/><polygon points='596,33 611,33 603.5,38.6' fill='#f58a1e'/><path d='M597.4 40.6 H609.6 V52.4 H606.2 L603.5 56.6 L600.8 52.4 H597.4 Z' fill='#000' stroke='#f58a1e' stroke-width='1.6'/><text x='603.5' y='50.6' text-anchor='middle' font-family="'DejaVu Sans Condensed','DejaVu Sans','Liberation Sans',sans-serif" font-weight='bold' font-size='10' fill='#f58a1e'>T</text></svg><div class='abs sep' style='top:290px'></div><div class='abs sep' style='top:524px'></div><div class='abs sep' style='top:758px'></div><div class='abs rline' style='left:1769px;top:29px;width:1px;height:967px;background:#646262'></div><div class='abs rline' style='left:1769px;top:29px;width:151px;height:1px'></div><div class='abs rline' style='left:1769px;top:995px;width:151px;height:1px'></div><div class='abs rline' style='left:1773px;top:189px;width:144px;height:1px'></div><div class='abs rline' style='left:1773px;top:241px;width:144px;height:1px'></div><div id='addnew' class='abs'>Add New...</div><div class='abs rbtn' style='left:1778px;top:54px;letter-spacing:0.05px'>Cursors</div><div class='abs rbtn' style='left:1850px;top:54px;letter-spacing:0.5px'>Callout</div><div class='abs rbtn' style='left:1778px;top:100px;letter-spacing:0.65px'>Measure</div><div class='abs rbtn' style='left:1850px;top:100px;letter-spacing:0.1px'>Search</div><div class='abs rbtn' style='left:1850px;top:146px;letter-spacing:1.0px'>Plot</div><div class='abs rbtn' style='left:1850px;top:196px;letter-spacing:0.9px'>More...</div><div class='abs rbtn two' style='left:1778px;top:146px'>Results<br>Table</div><div class='abs rbtn' style='left:1778px;top:196px'></div><svg width='1920' height='1080' viewBox='0 0 1920 1080'><rect x='1798.3' y='203.3' width='21.4' height='18.4' fill='none' stroke='#b8b8b8' stroke-width='1.8' stroke-dasharray='3.2 2.6'/><circle cx='1811.2' cy='210.2' r='4.1' fill='none' stroke='#b8b8b8' stroke-width='1.5'/><path d='M1808.2 213.4 L1803 218' stroke='#b8b8b8' stroke-width='2.4' stroke-linecap='round'/><path d='M1815.4 217.4 L1816.2 226.6 L1818.3 224.3 L1820.4 227.3 L1821.8 226.3 L1819.8 223.4 L1823 222.6 Z' fill='#b8b8b8'/></svg><div class='abs' style='left:1759.8px;top:501.6px;width:4.4px;height:4.4px;border-radius:50%;background:#cacaca'></div><div class='abs' style='left:1759.8px;top:510.3px;width:4.4px;height:4.4px;border-radius:50%;background:#cacaca'></div><div class='abs' style='left:1759.8px;top:519.0px;width:4.4px;height:4.4px;border-radius:50%;background:#cacaca'></div><div class='abs badge' style='left:3px'><div class='bd'><div class='ln' style='top:1.3px;letter-spacing:0px'>5 V/div</div><div class='ln' style='top:20.3px;letter-spacing:0px'>1 MΩ</div><div class='ln' style='top:39.3px;letter-spacing:0px'>200 kHz</div><div class='bw'>B<sub>W</sub></div></div><div class='hd' style='background:#4b4520;color:#f4e932;letter-spacing:-0.5px'>Ch 1</div></div><div class='abs badge off' style='left:98px'><div class='bd'><div class='ln' style='top:1.3px;letter-spacing:0px'>250 mV/div</div><div class='ln' style='top:20.3px;letter-spacing:0px'>1 MΩ</div><div class='ln' style='top:39.3px;letter-spacing:0px'>200 kHz</div><div class='bw'>B<sub>W</sub></div></div><div class='hd' style='background:#27807f;color:#1c1c1c;letter-spacing:-0.5px'>Ch 2</div></div><div class='abs badge off' style='left:193px'><div class='bd'><div class='ln' style='top:1.3px;letter-spacing:0px'>450 mV/div</div><div class='ln' style='top:20.3px;letter-spacing:0px'>1 MΩ</div><div class='ln' style='top:39.3px;letter-spacing:0px'>200 kHz</div><div class='bw'>B<sub>W</sub></div></div><div class='hd' style='background:#8f3949;color:#b9a3a6;letter-spacing:-0.5px'>Ch 3</div></div><div class='abs badge' style='left:288px'><div class='bd'><div class='ln' style='top:1.3px;letter-spacing:0px'>200 mV/div</div><div class='ln' style='top:20.3px;letter-spacing:0px'>1 MΩ</div><div class='ln' style='top:39.3px;letter-spacing:0px'>200 kHz</div><div class='bw'>B<sub>W</sub></div></div><div class='hd' style='background:#364021;color:#8ccb2e;letter-spacing:-0.5px'>Ch 4</div></div><div class='abs badge' style='left:383px'><div class='bd'><div class='ln' style='top:1.3px;letter-spacing:0px'>66.5 mT/div</div><div class='ln' style='top:20.3px;letter-spacing:0px'>Intg(Ch2)…</div></div><div class='hd' style='background:#4b3320;color:#f6921e;letter-spacing:0.9px'>Math 1</div></div><div class='abs badge' style='left:478px'><div class='bd'><div class='ln' style='top:1.3px;letter-spacing:0.36px'>170.34 A/div</div><div class='ln' style='top:20.3px;letter-spacing:0.2px'>-Intg(Ch3…</div></div><div class='hd' style='background:#6e2c8c;color:#ffffff;letter-spacing:0.9px'>Math 2</div></div><div class='abs sbtn' style='left:1023px'><div class='bar' style='background:#f6921e'></div><div class='num'>5</div></div><div class='abs sbtn' style='left:1068px'><div class='bar' style='background:#2a2ad2'></div><div class='num'>6</div></div><div class='abs vdiv' style='left:1118px'></div><div class='abs sbtn' style='left:1129px'><div class='bar' style='background:#a81f24'></div><div class='txt'>Add<br>New<br>Math</div></div><div class='abs sbtn' style='left:1174px'><div class='bar' style='background:#c9c9dc'></div><div class='txt'>Add<br>New<br>Ref</div></div><div class='abs sbtn' style='left:1219px'><div class='bar' style='background:#c462f4'></div><div class='txt'>Add<br>New<br>Bus</div></div><div class='abs vdiv' style='left:1269px'></div><div class='abs ibadge' style='left:1282px;width:197px'><div class='hd'>Horizontal</div><div class='ln' style='left:3px;top:19px'>4 ms/div</div><div class='ln' style='left:108.6px;top:19px'>40 ms</div><div class='ln' style='left:3px;top:38.3px;letter-spacing:-0.45px'>SR: 1 MS/s</div><div class='ln' style='left:109.6px;top:38.3px'>1 µs/pt</div><div class='ln' style='left:3px;top:57.1px;letter-spacing:-0.2px'>RL: 40 kpts</div><div class='ln' style='left:123.6px;top:57.1px'>3%</div></div><svg width='1920' height='1080' viewBox='0 0 1920 1080'><path d='M1391.8 1063.8 H1399 V1071.6 H1397 L1395.4 1074.4 L1393.8 1071.6 H1391.8 Z' fill='#000' stroke='#f58a1e' stroke-width='1.3'/><text x='1395.4' y='1070.6' text-anchor='middle' font-family="'DejaVu Sans Condensed','DejaVu Sans','Liberation Sans',sans-serif" font-weight='bold' font-size='7' fill='#fff'>T</text></svg><div class='abs ibadge' style='left:1487px;width:157px'><div class='hd'>Trigger</div><div class='abs' style='left:3.4px;top:21.4px;width:30px;height:15.6px;border:1px solid #000;border-radius:5px;background:#2323c4;color:#fff;text-align:center;line-height:12.6px;font-size:14.4px'>6</div><div class='ln' style='left:69.6px;top:19px'>3 V</div></div><svg width='1920' height='1080' viewBox='0 0 1920 1080'><path d='M1530 1037 H1534 L1542 1027.5 H1546' fill='none' stroke='#3d3d9c' stroke-width='1.2'/></svg><div class='abs ibadge' style='left:1652px;width:147px'><div class='hd'>Acquisition</div><div class='ln' style='left:3px;top:19px;letter-spacing:0.4px'>Manual,</div><div class='ln' style='left:84px;top:19px'>Analyze</div><div class='ln' style='left:3px;top:38.3px'>High Res: 16 bits</div><div class='ln' style='left:3px;top:57.1px'>Single: 0 /1</div></div><div class='abs vdiv' style='left:1811px'></div><div id='preview' class='abs'>Preview</div><div id='date' class='abs'>15 May 2025
1:16:11 PM</div><div id='logo' class='abs'>Tektronix</div><svg width='1920' height='1080' viewBox='0 0 1920 1080'><polygon points='1815.4,25.6 1822.6,25.6 1831.6,10 1824.4,10' fill='#23b5dd'/></svg></body></html>
